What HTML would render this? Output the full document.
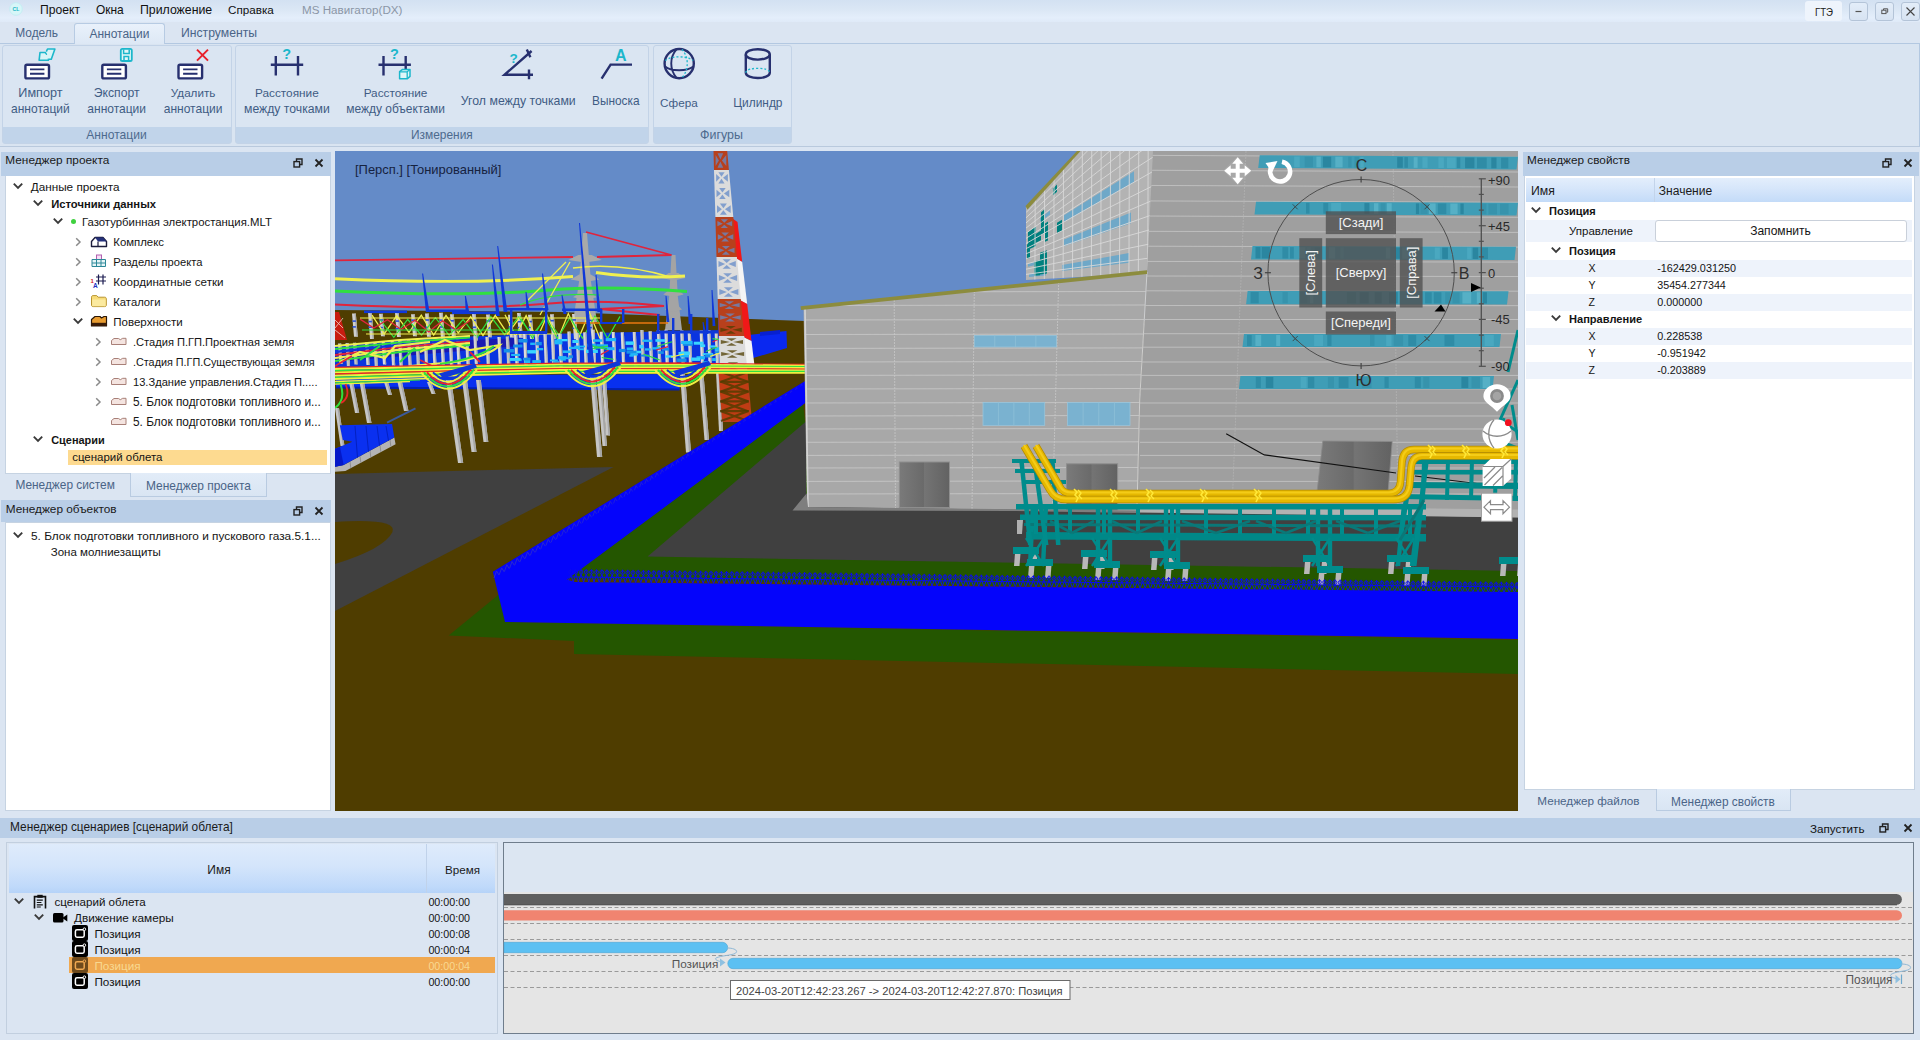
<!DOCTYPE html>
<html lang="ru"><head><meta charset="utf-8"><title>MS Навигатор(DX)</title><style>
*{box-sizing:border-box;margin:0;padding:0}
html,body{width:1920px;height:1040px;overflow:hidden}
body{background:#dbe5f2;font-family:"Liberation Sans",sans-serif;font-size:12px;color:#1e1e1e;position:relative}
.a{position:absolute;white-space:nowrap}
.t{position:absolute;white-space:nowrap;line-height:16px;height:16px}
.c{text-align:center}
.b{font-weight:bold}
#title{left:0;top:0;width:1920px;height:22px;background:linear-gradient(#d3e1f2 0,#dbe7f5 45%,#e4eefb 80%,#dfeaf8 100%)}
.menu{top:2px;font-size:12px;color:#111}
.tab{top:25px;font-size:12.5px;color:#4a6487}
#tabact{left:74px;top:23px;width:91px;height:21px;border:1px solid #b7cbe3;border-bottom:none;border-radius:3px 3px 0 0;background:linear-gradient(#e9f1fb,#dde8f5)}
#ribbon{left:0;top:43px;width:1920px;height:103.5px;border-top:1px solid #b3c8e1;border-bottom:1px solid #b9c9dd;border-right:1px solid #b3c8e1;background:#d9e4f1}
.grp{top:45px;height:99px;border:1px solid #c3d3e7;border-radius:3px;background:#dae5f2}
.grp i{position:absolute;left:0;right:0;top:81px;height:16px;background:#c1d4ea;display:block}
.gl{top:126.5px;font-size:12px;color:#4d6a8e;line-height:16px;text-align:center}
.rl{font-size:12px;color:#3f5c84;line-height:16.5px;text-align:center;width:130px}
.ph{background:#b9cee7;height:22px;font-size:12px;line-height:18px;color:#1a1a1a}
.ph span{position:absolute;left:5px;top:1px}
.pb{background:#fff;border:1px solid #c6d3e2}
.ptab{font-size:12.5px;color:#4a6487;line-height:16px}
.ptabact{border:1px solid #b9cbe1;border-top:none;background:linear-gradient(#e2ecf8,#d9e5f3)}
.tr{font-size:11.4px;color:#141414;line-height:16px;height:16px}
.sel{background:#fdda90}
.ar{position:absolute;width:10px;height:10px}
</style></head><body>
<div id="title" class="a"></div>
<svg class="a" style="left:9px;top:2px" width="14" height="14" viewBox="0 0 14 14"><circle cx="7" cy="7" r="6.3" fill="#d7f6f8" stroke="#bfeef2" stroke-width="0.8"/><text x="7" y="9" font-size="5.2" font-weight="bold" text-anchor="middle" fill="#19b6c6" font-family="Liberation Sans, sans-serif">CL</text></svg>
<div class="t menu" style="left:40px;top:2px;font-size:12.14px">Проект</div>
<div class="t menu" style="left:96px;top:2px;font-size:11.94px">Окна</div>
<div class="t menu" style="left:140px;top:2px;font-size:12.32px">Приложение</div>
<div class="t menu" style="left:228px;top:2px;font-size:11.66px">Справка</div>
<div class="t menu" style="left:302px;top:2px;color:#8b96a6;font-size:11.64px">MS Навигатор(DX)</div>
<div class="a" style="left:1805px;top:1px;width:37px;height:20px;background:#eef4fc;border-radius:3px"></div>
<div class="t  c" style="left:1803.5px;top:3.5px;width:40px;font-size:11.6px;color:#222;transform:scaleX(0.83)">ГТЭ</div>
<div class="a" style="left:1848.5px;top:2px;width:19px;height:19px;border:1px solid #b4c4d8;border-radius:3px;background:linear-gradient(#e3edf9,#d7e3f2)"></div>
<div class="a" style="left:1874.5px;top:2px;width:19px;height:19px;border:1px solid #b4c4d8;border-radius:3px;background:linear-gradient(#e3edf9,#d7e3f2)"></div>
<div class="a" style="left:1900.5px;top:2px;width:19px;height:19px;border:1px solid #b4c4d8;border-radius:3px;background:linear-gradient(#e3edf9,#d7e3f2)"></div>
<svg class="a" style="left:1848.5px;top:2px" width="19" height="19"><path d="M6.5 9.5h6" stroke="#555" stroke-width="1.2"/></svg>
<svg class="a" style="left:1874.5px;top:2px" width="19" height="19"><path d="M8.5 8V6.8h4.2v3.4h-1.2" fill="none" stroke="#555" stroke-width="1"/><rect x="6.8" y="8.2" width="4.2" height="3.4" fill="none" stroke="#555" stroke-width="1"/></svg>
<svg class="a" style="left:1900.5px;top:2px" width="19" height="19"><path d="M5.5 5.5l8 8M13.5 5.5l-8 8" stroke="#444" stroke-width="1.1"/></svg>
<div id="ribbon" class="a"></div>
<div id="tabact" class="a"></div>
<div class="t tab" style="left:15.2px;top:25px;font-size:11.95px">Модель</div>
<div class="t tab" style="left:89.4px;top:25.5px;font-size:12.0px">Аннотации</div>
<div class="t tab" style="left:181px;top:25px;font-size:12.19px">Инструменты</div>
<div class="a grp" style="left:2px;width:229.5px"><i></i></div>
<div class="t gl c" style="left:16.5px;top:126.5px;width:200px;font-size:12.08px;color:#4d6a8e">Аннотации</div>
<div class="a grp" style="left:235px;width:413.5px"><i></i></div>
<div class="t gl c" style="left:341.9px;top:126.5px;width:200px;font-size:11.9px;color:#4d6a8e">Измерения</div>
<div class="a grp" style="left:653px;width:139px"><i></i></div>
<div class="t gl c" style="left:621.5px;top:126.5px;width:200px;font-size:12.44px;color:#4d6a8e">Фигуры</div>
<div class="t rl c" style="left:-39.6px;top:84.5px;width:160px;font-size:12.64px;color:#3f5c84">Импорт</div>
<div class="t rl c" style="left:-39.6px;top:100.7px;width:160px;font-size:12.02px;color:#3f5c84">аннотаций</div>
<div class="t rl c" style="left:36.7px;top:84.5px;width:160px;font-size:12.19px;color:#3f5c84">Экспорт</div>
<div class="t rl c" style="left:36.7px;top:100.7px;width:160px;font-size:12.02px;color:#3f5c84">аннотации</div>
<div class="t rl c" style="left:113.1px;top:84.5px;width:160px;font-size:11.68px;color:#3f5c84">Удалить</div>
<div class="t rl c" style="left:113.1px;top:100.7px;width:160px;font-size:12.02px;color:#3f5c84">аннотации</div>
<div class="t rl c" style="left:206.89999999999998px;top:84.5px;width:160px;font-size:11.8px;color:#3f5c84">Расстояние</div>
<div class="t rl c" style="left:206.89999999999998px;top:100.7px;width:160px;font-size:12.21px;color:#3f5c84">между точками</div>
<div class="t rl c" style="left:315.5px;top:84.5px;width:160px;font-size:11.8px;color:#3f5c84">Расстояние</div>
<div class="t rl c" style="left:315.5px;top:100.7px;width:160px;font-size:11.99px;color:#3f5c84">между объектами</div>
<div class="t rl c" style="left:438.29999999999995px;top:92.7px;width:160px;font-size:12.29px;color:#3f5c84">Угол между точками</div>
<div class="t rl c" style="left:535.8px;top:92.7px;width:160px;font-size:11.85px;color:#3f5c84">Выноска</div>
<div class="t rl c" style="left:598.9px;top:94.5px;width:160px;font-size:11.7px;color:#3f5c84">Сфера</div>
<div class="t rl c" style="left:677.9px;top:94.5px;width:160px;font-size:11.91px;color:#3f5c84">Цилиндр</div>
<svg class="a" style="left:0;top:44px" width="800" height="84" viewBox="0 44 800 84"><rect x="25.4" y="64.8" width="23.6" height="13.6" rx="1.5" fill="#fff" stroke="#27306f" stroke-width="2.4"/><path d="M30.0 69.4h14.4M30.0 73.8h14.4" stroke="#27306f" stroke-width="1.9"/><path d="M40 52.5h5.2l1.3 1.6h3.2l-1.4 6.2h-9.2z" fill="#d9f4f7" stroke="#1cb7cb" stroke-width="1.6" stroke-linejoin="round"/><path d="M46.3 51.6l1.2-2.6h7.4l-3.6 10.3h-3" fill="#d9f4f7" stroke="#1cb7cb" stroke-width="1.6" stroke-linejoin="round"/><rect x="102.3" y="64.8" width="23.6" height="13.6" rx="1.5" fill="#fff" stroke="#27306f" stroke-width="2.4"/><path d="M106.89999999999999 69.4h14.4M106.89999999999999 73.8h14.4" stroke="#27306f" stroke-width="1.9"/><rect x="120.8" y="48.8" width="11" height="12.2" rx="1.6" fill="#e3f6f8" stroke="#1cb7cb" stroke-width="1.8"/><path d="M123.6 49.5v4h5.6v-4M124 61v-4.4h4.6V61" fill="none" stroke="#1cb7cb" stroke-width="1.5"/><rect x="178.5" y="64.8" width="23.6" height="13.6" rx="1.5" fill="#fff" stroke="#27306f" stroke-width="2.4"/><path d="M183.1 69.4h14.4M183.1 73.8h14.4" stroke="#27306f" stroke-width="1.9"/><path d="M197 49.6l11 11M208 49.6l-11 11" stroke="#e8202a" stroke-width="2"/><path d="M270.8 64.7h32.4M275.8 56v19.4M298.0 56v19.4" stroke="#27306f" stroke-width="2.4" fill="none"/><text x="286.8" y="58.6" font-size="14.5" font-weight="bold" fill="#1cb7cb" text-anchor="middle" font-family="Liberation Sans, sans-serif">?</text><path d="M378.5 64.7h32.4M383.5 56v19.4M405.7 56v19.4" stroke="#27306f" stroke-width="2.4" fill="none"/><text x="394.5" y="58.6" font-size="14.5" font-weight="bold" fill="#1cb7cb" text-anchor="middle" font-family="Liberation Sans, sans-serif">?</text><path d="M399.6 71.6l3-2.2h7.4v7l-2.6 2.4h-7.8z" fill="#dff6f8" stroke="#1cb7cb" stroke-width="1.5" stroke-linejoin="round"/><path d="M399.8 71.8h7.4v7M407.2 71.8l2.6-2.2" fill="none" stroke="#1cb7cb" stroke-width="1.3"/><path d="M533 74.8H504.5L531.6 51" fill="none" stroke="#27306f" stroke-width="2.4" stroke-linejoin="miter"/><path d="M529 69.6v9.6M526.8 49.6l3.6 7.6" stroke="#27306f" stroke-width="2.4"/><text x="513.5" y="62.6" font-size="13.5" font-weight="bold" fill="#1cb7cb" text-anchor="middle" font-family="Liberation Sans, sans-serif">?</text><path d="M601.6 78.6L610.6 64.6H632" fill="none" stroke="#27306f" stroke-width="2.4"/><text x="620.8" y="60.6" font-size="16" font-weight="bold" fill="#1cb7cb" text-anchor="middle" font-family="Liberation Sans, sans-serif">A</text><circle cx="679.2" cy="63.6" r="14.6" fill="none" stroke="#27306f" stroke-width="2.4"/><path d="M665 66.5c6 5 22 5 28.4 0M676.5 49.4c-7 8-7 20 0 28.4" fill="none" stroke="#27306f" stroke-width="1.9"/><path d="M665.2 60.6c6-5 22-5 28 0M682 49.4c7 8 7 20 0 28.4" fill="none" stroke="#1cb7cb" stroke-width="1.3" stroke-dasharray="2 2"/><path d="M745.8 54.4v18.4c0 7 24 7 24 0V54.4" fill="none" stroke="#27306f" stroke-width="2.4"/><ellipse cx="757.8" cy="54.4" rx="12" ry="5.2" fill="none" stroke="#27306f" stroke-width="2.4"/><path d="M745.8 72.8c0-6 24-6 24 0" fill="none" stroke="#1cb7cb" stroke-width="1.3" stroke-dasharray="2 2"/></svg>
<div class="a ph" style="left:1px;top:152px;width:330px;height:23.5px"><span style="left:4.3px;top:-0.7px;font-size:11.83px">Менеджер проекта</span></div>
<svg class="a" style="left:292.5px;top:157.5px" width="10" height="10" viewBox="0 0 10 10"><path d="M3.5 3V1h5.5v5.5h-2" fill="none" stroke="#222" stroke-width="1.4"/><rect x="1" y="3.6" width="5.6" height="5.4" fill="none" stroke="#222" stroke-width="1.4"/></svg>
<svg class="a" style="left:314px;top:158px" width="10" height="10" viewBox="0 0 10 10"><path d="M1.5 1.5L8.5 8.5M8.5 1.5L1.5 8.5" fill="none" stroke="#222" stroke-width="1.8"/></svg>
<div class="a pb" style="left:5px;top:175.5px;width:326px;height:298px;border-top:none"></div>
<svg class="a" style="left:12.5px;top:181px" width="10" height="10" viewBox="0 0 10 10"><path d="M0.8 2.6 L5 6.8 L9.2 2.6" fill="none" stroke="#3a3a3a" stroke-width="1.9"/></svg>
<div class="t tr" style="left:30.7px;top:179px;font-size:11.76px;">Данные проекта</div>
<svg class="a" style="left:32.5px;top:198px" width="10" height="10" viewBox="0 0 10 10"><path d="M0.8 2.6 L5 6.8 L9.2 2.6" fill="none" stroke="#3a3a3a" stroke-width="1.9"/></svg>
<div class="t tr b" style="left:51.2px;top:196px;font-size:11.22px;">Источники данных</div>
<svg class="a" style="left:52.5px;top:215.5px" width="10" height="10" viewBox="0 0 10 10"><path d="M0.8 2.6 L5 6.8 L9.2 2.6" fill="none" stroke="#3a3a3a" stroke-width="1.9"/></svg>
<div class="a" style="left:70.5px;top:219px;width:5px;height:5px;border-radius:50%;background:#3fd13f"></div>
<div class="t tr" style="left:82px;top:214px;font-size:11.37px;">Газотурбинная электростанция.MLT</div>
<svg class="a" style="left:73px;top:236.5px" width="10" height="10" viewBox="0 0 10 10"><path d="M3.2 1.2 L7 5 L3.2 8.8" fill="none" stroke="#8a8a8a" stroke-width="1.5"/></svg>
<div class="t tr" style="left:113.3px;top:234px;font-size:11.38px;">Комплекс</div>
<svg class="a" style="left:73px;top:256.5px" width="10" height="10" viewBox="0 0 10 10"><path d="M3.2 1.2 L7 5 L3.2 8.8" fill="none" stroke="#8a8a8a" stroke-width="1.5"/></svg>
<div class="t tr" style="left:113.3px;top:254px;font-size:11.2px;">Разделы проекта</div>
<svg class="a" style="left:73px;top:276.5px" width="10" height="10" viewBox="0 0 10 10"><path d="M3.2 1.2 L7 5 L3.2 8.8" fill="none" stroke="#8a8a8a" stroke-width="1.5"/></svg>
<div class="t tr" style="left:113.3px;top:274px;font-size:11.61px;">Координатные сетки</div>
<svg class="a" style="left:73px;top:296.5px" width="10" height="10" viewBox="0 0 10 10"><path d="M3.2 1.2 L7 5 L3.2 8.8" fill="none" stroke="#8a8a8a" stroke-width="1.5"/></svg>
<div class="t tr" style="left:113.3px;top:294px;font-size:11.25px;">Каталоги</div>
<svg class="a" style="left:72.5px;top:316px" width="10" height="10" viewBox="0 0 10 10"><path d="M0.8 2.6 L5 6.8 L9.2 2.6" fill="none" stroke="#3a3a3a" stroke-width="1.9"/></svg>
<div class="t tr" style="left:113.3px;top:314px;font-size:11.53px;">Поверхности</div>
<svg class="a" style="left:90px;top:232px" width="18" height="100" viewBox="0 0 18 100"><path d="M1.5 14.5V9.5L5 5.5h8l3.5 4v5z" fill="#fff" stroke="#1c1c3c" stroke-width="1.4" stroke-linejoin="round"/><path d="M5 5.5h8l3.5 4H8z" fill="#24307a"/><path d="M8 9.5v5" stroke="#1c1c3c" stroke-width="1.2"/><g transform="translate(0,20)"><rect x="6.5" y="3" width="5" height="4.5" fill="#f7dff7" stroke="#b060b0" stroke-width="1"/><path d="M2 7.5h13.5v7H2zM6.5 7.5v7M11 7.5v7M2 11h13.5" fill="#e6f5f7" stroke="#2c8898" stroke-width="1"/></g><g transform="translate(0,40)"><path d="M6 5h10M6 9h10M8.5 2.5v10M13 2.5v10" stroke="#1c1c50" stroke-width="1.2" fill="none"/><text x="0.5" y="11" font-size="6" font-weight="bold" fill="#d02020" font-family="Liberation Sans, sans-serif">1</text><text x="3" y="16" font-size="6.5" font-weight="bold" fill="#2030c0" font-family="Liberation Sans, sans-serif">A</text></g><g transform="translate(0,60)"><path d="M1.5 5.2c0-1 .6-1.6 1.6-1.6h3.6l1.4 1.6h6.6c1 0 1.6.6 1.6 1.6v6.2c0 1-.6 1.6-1.6 1.6H3.100c-1 0-1.600-.6-1.600-1.600z" fill="#f8dc78" stroke="#b89430" stroke-width="1"/><path d="M2.200 7.6h13.400v5.800c0 .4-.3.800-.800.800H3c-.5 0-.8-.3-.8-.800z" fill="#fbeaa0"/></g><g transform="translate(0,80)"><path d="M1.500 7.500l3.500-3h5l1.500 1.500 2.500-1.500h2.500v9.500h-15z" fill="#e89c30" stroke="#2a1606" stroke-width="1.200" stroke-linejoin="round"/><path d="M1.500 10.800h15v3.200h-15z" fill="#3a1c08"/></g></svg>
<svg class="a" style="left:92.5px;top:336.5px" width="10" height="10" viewBox="0 0 10 10"><path d="M3.2 1.2 L7 5 L3.2 8.8" fill="none" stroke="#8a8a8a" stroke-width="1.5"/></svg>
<div class="t tr" style="left:133px;top:334px;font-size:11.1px;">.Стадия П.ГП.Проектная земля</div>
<svg class="a" style="left:110px;top:334px" width="18" height="14" viewBox="0 0 18 14"><path d="M1.500 10.500V6.500l2.500-2h4.500l1.800 1.200 2.400-1.400h3.300v6.200z" fill="#f4e4e0" stroke="#a88078" stroke-width="1" stroke-linejoin="round"/></svg>
<svg class="a" style="left:92.5px;top:356.5px" width="10" height="10" viewBox="0 0 10 10"><path d="M3.2 1.2 L7 5 L3.2 8.8" fill="none" stroke="#8a8a8a" stroke-width="1.5"/></svg>
<div class="t tr" style="left:133px;top:354px;font-size:10.81px;">.Стадия П.ГП.Существующая земля</div>
<svg class="a" style="left:110px;top:354px" width="18" height="14" viewBox="0 0 18 14"><path d="M1.500 10.500V6.500l2.500-2h4.500l1.800 1.200 2.400-1.400h3.300v6.200z" fill="#f4e4e0" stroke="#a88078" stroke-width="1" stroke-linejoin="round"/></svg>
<svg class="a" style="left:92.5px;top:376.5px" width="10" height="10" viewBox="0 0 10 10"><path d="M3.2 1.2 L7 5 L3.2 8.8" fill="none" stroke="#8a8a8a" stroke-width="1.5"/></svg>
<div class="t tr" style="left:133px;top:374px;font-size:11.11px;">13.Здание управления.Стадия П.....</div>
<svg class="a" style="left:110px;top:374px" width="18" height="14" viewBox="0 0 18 14"><path d="M1.500 10.500V6.500l2.500-2h4.500l1.800 1.200 2.400-1.400h3.300v6.200z" fill="#f4e4e0" stroke="#a88078" stroke-width="1" stroke-linejoin="round"/></svg>
<svg class="a" style="left:92.5px;top:396.5px" width="10" height="10" viewBox="0 0 10 10"><path d="M3.2 1.2 L7 5 L3.2 8.8" fill="none" stroke="#8a8a8a" stroke-width="1.5"/></svg>
<div class="t tr" style="left:133px;top:394px;font-size:11.85px;">5. Блок подготовки топливного и...</div>
<svg class="a" style="left:110px;top:394px" width="18" height="14" viewBox="0 0 18 14"><path d="M1.500 10.500V6.500l2.500-2h4.500l1.800 1.200 2.400-1.400h3.300v6.200z" fill="#f4e4e0" stroke="#a88078" stroke-width="1" stroke-linejoin="round"/></svg>
<div class="t tr" style="left:133px;top:414px;font-size:11.85px;">5. Блок подготовки топливного и...</div>
<svg class="a" style="left:110px;top:414px" width="18" height="14" viewBox="0 0 18 14"><path d="M1.500 10.500V6.500l2.500-2h4.500l1.800 1.200 2.400-1.400h3.300v6.200z" fill="#f4e4e0" stroke="#a88078" stroke-width="1" stroke-linejoin="round"/></svg>
<svg class="a" style="left:32.5px;top:433.5px" width="10" height="10" viewBox="0 0 10 10"><path d="M0.8 2.6 L5 6.8 L9.2 2.6" fill="none" stroke="#3a3a3a" stroke-width="1.9"/></svg>
<div class="t tr b" style="left:51.2px;top:432px;font-size:10.95px;">Сценарии</div>
<div class="a sel" style="left:68px;top:450px;width:259px;height:14.5px"></div>
<div class="t tr" style="left:72.2px;top:449px;font-size:11.47px;">сценарий облета</div>
<div class="a ptabact" style="left:130px;top:473px;width:136.5px;height:24px"></div>
<div class="t ptab" style="left:15.4px;top:477.3px;font-size:11.89px">Менеджер систем</div>
<div class="t ptab" style="left:146px;top:477.8px;font-size:11.94px">Менеджер проекта</div>
<div class="a ph" style="left:1px;top:500px;width:330px"><span style="left:4.7px;top:0;font-size:11.82px">Менеджер объектов</span></div>
<svg class="a" style="left:292.5px;top:505.5px" width="10" height="10" viewBox="0 0 10 10"><path d="M3.5 3V1h5.5v5.5h-2" fill="none" stroke="#222" stroke-width="1.4"/><rect x="1" y="3.6" width="5.6" height="5.4" fill="none" stroke="#222" stroke-width="1.4"/></svg>
<svg class="a" style="left:314px;top:506px" width="10" height="10" viewBox="0 0 10 10"><path d="M1.5 1.5L8.5 8.5M8.5 1.5L1.5 8.5" fill="none" stroke="#222" stroke-width="1.8"/></svg>
<div class="a pb" style="left:5px;top:522px;width:326px;height:289px"></div>
<svg class="a" style="left:12.5px;top:529.5px" width="10" height="10" viewBox="0 0 10 10"><path d="M0.8 2.6 L5 6.8 L9.2 2.6" fill="none" stroke="#3a3a3a" stroke-width="1.9"/></svg>
<div class="t tr" style="left:31px;top:527.5px;font-size:11.84px;">5. Блок подготовки топливного и пускового газа.5.1...</div>
<div class="t tr" style="left:50.7px;top:544px;font-size:11.53px;">Зона молниезащиты</div>
<div class="a ph" style="left:1523px;top:152px;width:396px;height:23.5px"><span style="left:4px;top:-0.7px;font-size:11.77px">Менеджер свойств</span></div>
<svg class="a" style="left:1881.5px;top:157.5px" width="10" height="10" viewBox="0 0 10 10"><path d="M3.5 3V1h5.5v5.5h-2" fill="none" stroke="#222" stroke-width="1.4"/><rect x="1" y="3.6" width="5.6" height="5.4" fill="none" stroke="#222" stroke-width="1.4"/></svg>
<svg class="a" style="left:1902.5px;top:158px" width="10" height="10" viewBox="0 0 10 10"><path d="M1.5 1.5L8.5 8.5M8.5 1.5L1.5 8.5" fill="none" stroke="#222" stroke-width="1.8"/></svg>
<div class="a pb" style="left:1524px;top:175.5px;width:391px;height:614.5px;border-top:none"></div>
<div class="a" style="left:1526px;top:178px;width:386px;height:23.5px;background:linear-gradient(#e3eefc 0,#d3e4fa 55%,#c3dbf8 100%)"></div>
<div class="a" style="left:1654px;top:178px;width:1px;height:23.5px;background:#c3d4ea"></div>
<div class="t " style="left:1531px;top:182.5px;font-size:12.22px;color:#1a1a1a">Имя</div>
<div class="t " style="left:1658.8px;top:182.5px;font-size:12.04px;color:#1a1a1a">Значение</div>
<div class="a" style="left:1526px;top:219.5px;width:386px;height:22.5px;background:#eef3fb"></div>
<div class="a" style="left:1526px;top:259.5px;width:386px;height:17px;background:#eef3fb"></div>
<div class="a" style="left:1526px;top:293.5px;width:386px;height:17px;background:#eef3fb"></div>
<div class="a" style="left:1526px;top:327.5px;width:386px;height:17px;background:#eef3fb"></div>
<div class="a" style="left:1526px;top:361.5px;width:386px;height:17px;background:#eef3fb"></div>
<svg class="a" style="left:1531px;top:205px" width="10" height="10" viewBox="0 0 10 10"><path d="M0.8 2.6 L5 6.8 L9.2 2.6" fill="none" stroke="#3a3a3a" stroke-width="1.9"/></svg>
<div class="t tr b" style="left:1549px;top:203px;font-size:11.03px;">Позиция</div>
<div class="t tr" style="left:1569px;top:223px;font-size:11.51px;">Управление</div>
<div class="a" style="left:1654.5px;top:219.5px;width:252.5px;height:22px;border:1px solid #c9d0da;border-radius:3px;background:#fff"></div>
<div class="t tr c" style="left:1720.5px;top:223px;width:120px;font-size:12.07px">Запомнить</div>
<svg class="a" style="left:1550.5px;top:245px" width="10" height="10" viewBox="0 0 10 10"><path d="M0.8 2.6 L5 6.8 L9.2 2.6" fill="none" stroke="#3a3a3a" stroke-width="1.9"/></svg>
<div class="t tr b" style="left:1569px;top:243px;font-size:11.03px;">Позиция</div>
<div class="t tr" style="left:1588.5px;top:260px;font-size:10.6px;">X</div>
<div class="t tr" style="left:1657.2px;top:260px;font-size:10.82px;">-162429.031250</div>
<div class="t tr" style="left:1588.5px;top:277px;font-size:10.6px;">Y</div>
<div class="t tr" style="left:1657.2px;top:277px;font-size:10.74px;">35454.277344</div>
<div class="t tr" style="left:1588.5px;top:294px;font-size:10.6px;">Z</div>
<div class="t tr" style="left:1657.2px;top:294px;font-size:10.79px;">0.000000</div>
<svg class="a" style="left:1550.5px;top:313px" width="10" height="10" viewBox="0 0 10 10"><path d="M0.8 2.6 L5 6.8 L9.2 2.6" fill="none" stroke="#3a3a3a" stroke-width="1.9"/></svg>
<div class="t tr b" style="left:1569px;top:311px;font-size:11.08px;">Направление</div>
<div class="t tr" style="left:1588.5px;top:328px;font-size:10.6px;">X</div>
<div class="t tr" style="left:1657.2px;top:328px;font-size:10.79px;">0.228538</div>
<div class="t tr" style="left:1588.5px;top:345px;font-size:10.6px;">Y</div>
<div class="t tr" style="left:1657.2px;top:345px;font-size:10.79px;">-0.951942</div>
<div class="t tr" style="left:1588.5px;top:362px;font-size:10.6px;">Z</div>
<div class="t tr" style="left:1657.2px;top:362px;font-size:10.79px;">-0.203889</div>
<div class="a ptabact" style="left:1655.5px;top:789px;width:135px;height:22px"></div>
<div class="t ptab" style="left:1537.3px;top:793.2px;font-size:11.69px">Менеджер файлов</div>
<div class="t ptab" style="left:1671px;top:793.8px;font-size:11.86px">Менеджер свойств</div>
<div class="a ph" style="left:0;top:818px;width:1920px;height:20px"><span style="left:10px;top:0px;font-size:11.89px">Менеджер сценариев [сценарий облета]</span></div>
<div class="t " style="left:1810px;top:820.5px;font-size:11.63px;color:#111">Запустить</div>
<svg class="a" style="left:1878.5px;top:822.5px" width="10" height="10" viewBox="0 0 10 10"><path d="M3.5 3V1h5.5v5.5h-2" fill="none" stroke="#222" stroke-width="1.4"/><rect x="1" y="3.6" width="5.6" height="5.4" fill="none" stroke="#222" stroke-width="1.4"/></svg>
<svg class="a" style="left:1902.5px;top:823px" width="10" height="10" viewBox="0 0 10 10"><path d="M1.5 1.5L8.5 8.5M8.5 1.5L1.5 8.5" fill="none" stroke="#222" stroke-width="1.8"/></svg>
<div class="a" style="left:6px;top:842px;width:492px;height:192px;border:1px solid #c2cfdf;background:#dbe5f2"></div>
<div class="a" style="left:9px;top:844px;width:486px;height:48.5px;background:linear-gradient(#dfebfb 0,#d4e5fb 45%,#bfd9fa 88%,#b6d3f8 100%)"></div>
<div class="a" style="left:425.5px;top:844px;width:1px;height:48.5px;background:#c0d2ea"></div>
<div class="t  c" style="left:189.0px;top:862px;width:60px;font-size:11.96px;color:#1a1a1a">Имя</div>
<div class="t  c" style="left:432.5px;top:862px;width:60px;font-size:11.63px;color:#1a1a1a">Время</div>
<div class="a" style="left:69px;top:957px;width:426px;height:16px;background:#f0a850"></div>
<svg class="a" style="left:13.5px;top:895.5px" width="10" height="10" viewBox="0 0 10 10"><path d="M0.8 2.6 L5 6.8 L9.2 2.6" fill="none" stroke="#3a3a3a" stroke-width="1.9"/></svg>
<svg class="a" style="left:33.5px;top:911.5px" width="10" height="10" viewBox="0 0 10 10"><path d="M0.8 2.6 L5 6.8 L9.2 2.6" fill="none" stroke="#3a3a3a" stroke-width="1.9"/></svg>
<div class="t tr" style="left:54.4px;top:894.3px;font-size:11.6px;">сценарий облета</div>
<div class="t tr" style="left:74px;top:910.2px;font-size:11.77px;">Движение камеры</div>
<div class="t tr" style="left:428.4px;top:894.3px;font-size:10.71px;">00:00:00</div>
<div class="t tr" style="left:428.4px;top:910.2px;font-size:10.71px;">00:00:00</div>
<div class="t tr" style="left:428.4px;top:926.2px;font-size:10.71px;">00:00:08</div>
<div class="t tr" style="left:94.4px;top:926.2px;font-size:11.71px;">Позиция</div>
<svg class="a" style="left:72px;top:925.2px" width="16" height="16" viewBox="0 0 16 16"><rect x="0" y="0" width="16" height="16" rx="2" fill="#000"/><rect x="3.400" y="4.800" width="8.800" height="7.400" rx="1.600" fill="none" stroke="#fff" stroke-width="1.500"/><circle cx="12.400" cy="4.200" r="1.300" fill="#000" stroke="#fff" stroke-width="1"/></svg>
<div class="t tr" style="left:428.4px;top:942.2px;font-size:10.71px;">00:00:04</div>
<div class="t tr" style="left:94.4px;top:942.2px;font-size:11.71px;">Позиция</div>
<svg class="a" style="left:72px;top:941.2px" width="16" height="16" viewBox="0 0 16 16"><rect x="0" y="0" width="16" height="16" rx="2" fill="#000"/><rect x="3.400" y="4.800" width="8.800" height="7.400" rx="1.600" fill="none" stroke="#fff" stroke-width="1.500"/><circle cx="12.400" cy="4.200" r="1.300" fill="#000" stroke="#fff" stroke-width="1"/></svg>
<div class="t tr" style="left:428.4px;top:958.2px;font-size:10.71px;color:#f8d890;">00:00:04</div>
<div class="t tr" style="left:94.4px;top:958.2px;font-size:11.71px;color:#f8d890;">Позиция</div>
<svg class="a" style="left:72px;top:957.2px" width="16" height="16" viewBox="0 0 16 16"><rect x="0" y="0" width="16" height="16" rx="2" fill="#6e4a1c"/><rect x="3.400" y="4.800" width="8.800" height="7.400" rx="1.600" fill="none" stroke="#f0a850" stroke-width="1.500"/><circle cx="12.400" cy="4.200" r="1.300" fill="#6e4a1c" stroke="#f0a850" stroke-width="1"/></svg>
<div class="t tr" style="left:428.4px;top:974.2px;font-size:10.71px;">00:00:00</div>
<div class="t tr" style="left:94.4px;top:974.2px;font-size:11.71px;">Позиция</div>
<svg class="a" style="left:72px;top:973.2px" width="16" height="16" viewBox="0 0 16 16"><rect x="0" y="0" width="16" height="16" rx="2" fill="#000"/><rect x="3.400" y="4.800" width="8.800" height="7.400" rx="1.600" fill="none" stroke="#fff" stroke-width="1.500"/><circle cx="12.400" cy="4.200" r="1.300" fill="#000" stroke="#fff" stroke-width="1"/></svg>
<svg class="a" style="left:33.3px;top:894.3px" width="14" height="15" viewBox="0 0 14 15"><path d="M1.500 14.500V2.600h11V14.500" fill="none" stroke="#111" stroke-width="1.600"/><path d="M4.300 0.800h5.400v3h-5.400z" fill="#111"/><path d="M3.800 6.200h6M3.800 8.500h4.600M3.800 10.800h6M3.800 13h4" stroke="#111" stroke-width="1.200"/></svg>
<svg class="a" style="left:52.700px;top:911.800px" width="15" height="12" viewBox="0 0 15 12"><rect x="0" y="1" width="10.500" height="9.500" rx="1.500" fill="#000"/><path d="M10 5.500l4.300-3v7l-4.300-3z" fill="#000"/></svg>
<svg class="a" style="left:503px;top:842px" width="1411" height="192" viewBox="503 842 1411 192"><rect x="503.500" y="842.500" width="1410" height="191" fill="#dce6f2" stroke="#6f7d8c" stroke-width="1"/><rect x="504" y="892" width="1409" height="141" fill="#e5e5e5"/><path d="M504 907.5H1913" stroke="#9a9a9a" stroke-width="1" stroke-dasharray="4 2.500"/><path d="M504 923.5H1913" stroke="#9a9a9a" stroke-width="1" stroke-dasharray="4 2.500"/><path d="M504 939.5H1913" stroke="#9a9a9a" stroke-width="1" stroke-dasharray="4 2.500"/><path d="M504 955.5H1913" stroke="#9a9a9a" stroke-width="1" stroke-dasharray="4 2.500"/><path d="M504 971.5H1913" stroke="#9a9a9a" stroke-width="1" stroke-dasharray="4 2.500"/><path d="M504 987.5H1913" stroke="#9a9a9a" stroke-width="1" stroke-dasharray="4 2.500"/><path d="M504 894H1896.500a5.400 5.400 0 0 1 0 10.800H504z" fill="#5f5f5f"/><path d="M504 904.800H1897" stroke="#444" stroke-width="1"/><path d="M504 910.200H1896.800a5.200 5.200 0 0 1 0 10.400H504z" fill="#f08470"/><path d="M504 942.300H722.500a5.200 5.200 0 0 1 0 10.400H504z" fill="#5cc0f2" stroke="#4aa4d4" stroke-width="0.600"/><path d="M733 958.300H1896.800a5.200 5.200 0 0 1 0 10.400H733a5.200 5.200 0 0 1 0-10.400z" fill="#5cc0f2" stroke="#4aa4d4" stroke-width="0.600"/><path d="M727 948c8 0 12 3 8 5.500c-4 2-14 2-19 4.500c-2 1.500 2 3 6 4" fill="none" stroke="#8fb8d6" stroke-width="1"/><path d="M720 958.500l5.500 4-5.500 4z" fill="#8fc0e0"/><path d="M1901 964c8 0 12 3 8 5.500c-4 2-14 2-18 5c-2 1.500 1 3 5 4" fill="none" stroke="#8fb8d6" stroke-width="1"/><path d="M1895.500 975l5 4.300-5 4.300z" fill="#8fc0e0"/><path d="M1901.500 974.500v9.500" stroke="#6fa8cc" stroke-width="1.200"/><text x="671.7" y="968" font-size="11.81" fill="#555" font-family="Liberation Sans, sans-serif">Позиция</text><text x="1845.6" y="984" font-size="11.86" fill="#555" font-family="Liberation Sans, sans-serif">Позиция</text><rect x="730.500" y="980.500" width="339.500" height="19" fill="#fff" stroke="#6a6a6a" stroke-width="1"/><text x="736" y="994.600" font-size="11.22" fill="#444" font-family="Liberation Sans, sans-serif">2024-03-20T12:42:23.267 -&gt; 2024-03-20T12:42:27.870: Позиция</text></svg>
<svg class="a" style="left:335px;top:151px" width="1183" height="660" viewBox="335 151 1183 660" font-family="Liberation Sans, sans-serif"><rect x="335" y="151" width="1183" height="660" fill="#648bc8"/><polygon points="335,310 560,312 805,321 1518,321 1518,811 335,811" fill="#4f3d00" /><polygon points="583,233 587,233 591,281.9 597,322 573,322 579,281.9" fill="#a9a9a9" /><polygon points="568.2,259.9 578.3,254.9 591.7,254.9 601.8,259.9 585,262.4" fill="#a9a9a9" /><polygon points="570.6,279.5 579.2,274.5 590.8,274.5 599.4,279.5 585,282" fill="#a9a9a9" /><polygon points="573,297.3 580.2,292.3 589.8,292.3 597,297.3 585,299.8" fill="#a9a9a9" /><polygon points="671.5,255 675.5,255 677.8,296.2 682,330 665,330 669.2,296.2" fill="#a4a4a4" /><polygon points="661.6,278 668.7,273 678.3,273 685.4,278 673.5,280.5" fill="#a4a4a4" /><polygon points="663.3,294.5 669.4,289.5 677.6,289.5 683.7,294.5 673.5,297" fill="#a4a4a4" /><polygon points="665,309.5 670.1,304.5 676.9,304.5 682,309.5 673.5,312" fill="#a4a4a4" /><path d="M335 260.3L573 257" stroke="#e0243c" stroke-width="1.8" fill="none"/><path d="M586 232L671.5 255L597 257" stroke="#e0243c" stroke-width="1.8" fill="none"/><path d="M335 278.7Q470 285 573 276.5M596 272.5Q640 279 685 276" stroke="#f0f050" stroke-width="2.9" fill="none"/><path d="M573 268Q620 262 670 277" stroke="#f0f050" stroke-width="1.5" fill="none"/><path d="M335 291Q470 297.5 563 289Q620 286 687 291.5" stroke="#30e040" stroke-width="2.9" fill="none"/><path d="M335 304.5Q465 311 563 302.5Q610 300 664 306L600 309L660 315" stroke="#e0243c" stroke-width="2" fill="none"/><path d="M528 300L566 262M570 262L540 315" stroke="#f0f050" stroke-width="1.3" fill="none"/><path d="M520 305Q550 292 600 295" stroke="#30e040" stroke-width="1.2" fill="none"/><polygon points="335,346 430,338 520,334.5 730,330 746,332 746,364 335,370" fill="#0a34e0" /><polygon points="335,352 470,340 520,338 520,346 335,362" fill="#1a1ab0" /><polygon points="352,313.5 355.8,313.5 357.8,336.8 354,336.8" fill="#cfcfcf" /><polygon points="354.5,313.5 355.8,313.5 357.8,336.8 356.5,336.8" fill="#a9a9a9" /><rect x="352.5" y="320.3" width="3.4" height="1.6" fill="#2a50d8"/><rect x="352.5" y="326.1" width="3.4" height="1.6" fill="#2a50d8"/><polygon points="368,312.8 371.8,312.8 373.8,338.9 370,338.9" fill="#cfcfcf" /><polygon points="370.5,312.8 371.8,312.8 373.8,338.9 372.5,338.9" fill="#a9a9a9" /><rect x="368.5" y="320.8" width="3.4" height="1.6" fill="#2a50d8"/><rect x="368.5" y="326.4" width="3.4" height="1.6" fill="#2a50d8"/><polygon points="379,313.8 382.8,313.8 384.8,336.3 381,336.3" fill="#cfcfcf" /><polygon points="381.5,313.8 382.8,313.8 384.8,336.3 383.5,336.3" fill="#a9a9a9" /><rect x="379.5" y="319.2" width="3.4" height="1.6" fill="#2a50d8"/><rect x="379.5" y="326.8" width="3.4" height="1.6" fill="#2a50d8"/><polygon points="395,312.9 398.8,312.9 400.8,337.1 397,337.1" fill="#cfcfcf" /><polygon points="397.5,312.9 398.8,312.9 400.8,337.1 399.5,337.1" fill="#a9a9a9" /><rect x="395.5" y="320.3" width="3.4" height="1.6" fill="#2a50d8"/><rect x="395.5" y="327.9" width="3.4" height="1.6" fill="#2a50d8"/><polygon points="411,314.3 414.8,314.3 416.8,336.2 413,336.2" fill="#cfcfcf" /><polygon points="413.5,314.3 414.8,314.3 416.8,336.2 415.5,336.2" fill="#a9a9a9" /><rect x="411.5" y="319.4" width="3.4" height="1.6" fill="#2a50d8"/><rect x="411.5" y="327.1" width="3.4" height="1.6" fill="#2a50d8"/><polygon points="425,313.4 428.8,313.4 430.8,336.7 427,336.7" fill="#cfcfcf" /><polygon points="427.5,313.4 428.8,313.4 430.8,336.7 429.5,336.7" fill="#a9a9a9" /><rect x="425.5" y="319.2" width="3.4" height="1.6" fill="#2a50d8"/><rect x="425.5" y="326.6" width="3.4" height="1.6" fill="#2a50d8"/><polygon points="439,312.8 442.8,312.8 444.8,338.9 441,338.9" fill="#cfcfcf" /><polygon points="441.5,312.8 442.8,312.8 444.8,338.9 443.5,338.9" fill="#a9a9a9" /><rect x="439.5" y="319.4" width="3.4" height="1.6" fill="#2a50d8"/><rect x="439.5" y="326.2" width="3.4" height="1.6" fill="#2a50d8"/><polygon points="450,314.2 453.8,314.2 455.8,339.1 452,339.1" fill="#cfcfcf" /><polygon points="452.5,314.2 453.8,314.2 455.8,339.1 454.5,339.1" fill="#a9a9a9" /><rect x="450.5" y="320" width="3.4" height="1.6" fill="#2a50d8"/><rect x="450.5" y="327.1" width="3.4" height="1.6" fill="#2a50d8"/><polygon points="472,313.9 475.8,313.9 477.8,340.6 474,340.6" fill="#cfcfcf" /><polygon points="474.5,313.9 475.8,313.9 477.8,340.6 476.5,340.6" fill="#a9a9a9" /><rect x="472.5" y="319.7" width="3.4" height="1.6" fill="#2a50d8"/><rect x="472.5" y="326.5" width="3.4" height="1.6" fill="#2a50d8"/><polygon points="486,314.6 489.8,314.6 491.8,337.2 488,337.2" fill="#cfcfcf" /><polygon points="488.5,314.6 489.8,314.6 491.8,337.2 490.5,337.2" fill="#a9a9a9" /><rect x="486.5" y="320.1" width="3.4" height="1.6" fill="#2a50d8"/><rect x="486.5" y="327.1" width="3.4" height="1.6" fill="#2a50d8"/><polygon points="508,314.7 511.8,314.7 513.8,337.4 510,337.4" fill="#cfcfcf" /><polygon points="510.5,314.7 511.8,314.7 513.8,337.4 512.5,337.4" fill="#a9a9a9" /><rect x="508.5" y="321" width="3.4" height="1.6" fill="#2a50d8"/><rect x="508.5" y="326.2" width="3.4" height="1.6" fill="#2a50d8"/><polygon points="517,313 520.8,313 522.8,337.7 519,337.7" fill="#cfcfcf" /><polygon points="519.5,313 520.8,313 522.8,337.7 521.5,337.7" fill="#a9a9a9" /><rect x="517.5" y="320.9" width="3.4" height="1.6" fill="#2a50d8"/><rect x="517.5" y="326.8" width="3.4" height="1.6" fill="#2a50d8"/><polygon points="528,314.8 531.8,314.8 533.8,338.9 530,338.9" fill="#cfcfcf" /><polygon points="530.5,314.8 531.8,314.8 533.8,338.9 532.5,338.9" fill="#a9a9a9" /><rect x="528.5" y="320.8" width="3.4" height="1.6" fill="#2a50d8"/><rect x="528.5" y="326.6" width="3.4" height="1.6" fill="#2a50d8"/><polygon points="550,314.3 553.8,314.3 555.8,338.9 552,338.9" fill="#cfcfcf" /><polygon points="552.5,314.3 553.8,314.3 555.8,338.9 554.5,338.9" fill="#a9a9a9" /><rect x="550.5" y="319.9" width="3.4" height="1.6" fill="#2a50d8"/><rect x="550.5" y="327.7" width="3.4" height="1.6" fill="#2a50d8"/><polygon points="572,313.9 575.8,313.9 577.8,339.3 574,339.3" fill="#cfcfcf" /><polygon points="574.5,313.9 575.8,313.9 577.8,339.3 576.5,339.3" fill="#a9a9a9" /><rect x="572.5" y="319.1" width="3.4" height="1.6" fill="#2a50d8"/><rect x="572.5" y="327.4" width="3.4" height="1.6" fill="#2a50d8"/><polygon points="588,315.5 591.8,315.5 593.8,340.1 590,340.1" fill="#cfcfcf" /><polygon points="590.5,315.5 591.8,315.5 593.8,340.1 592.5,340.1" fill="#a9a9a9" /><rect x="588.5" y="319.6" width="3.4" height="1.6" fill="#2a50d8"/><rect x="588.5" y="326.8" width="3.4" height="1.6" fill="#2a50d8"/><path d="M372 315.1 L384.3 333.8 L396.7 315.7 L409 332.5 L421.3 315.2 L433.7 335.1 L446 315.5 L458.3 333 L470.7 316.6 L483 335.5 L495.3 315.3 L507.7 333.8 L520 317.2" stroke="#f0f050" stroke-width="1.3" fill="none"/><path d="M380 319.5 L393.8 337.3 L407.7 319.5 L421.5 335.1 L435.4 317.7 L449.2 335.4 L463.1 319.5 L476.9 337.8 L490.8 316.6 L504.6 334.7 L518.5 316.9 L532.3 334.9 L546.2 317.9 L560 336.4" stroke="#30e040" stroke-width="1.2" fill="none"/><path d="M360 319.1 L373.8 328 L387.5 319.7 L401.2 329.5 L415 320.3 L428.8 331.8 L442.5 320.8 L456.2 330.1 L470 320.5" stroke="#e0243c" stroke-width="1.3" fill="none"/><path d="M505 314.7 L515.6 336.2 L526.1 315.6 L536.7 339.1 L547.2 315.5 L557.8 339.2 L568.3 313.6 L578.9 337.6 L589.4 312.4 L600 338.5" stroke="#f0f050" stroke-width="1.3" fill="none"/><path d="M520 316.2 L532.5 338.3 L545 316.8 L557.5 338.6 L570 317.4 L582.5 338.2 L595 316 L607.5 338.6 L620 316.4" stroke="#30e040" stroke-width="1.2" fill="none"/><path d="M360 318H600M366 334H560" stroke="#f0f050" stroke-width="1.1"/><path d="M362 330H520" stroke="#30e040" stroke-width="1.1"/><path d="M575 323H668" stroke="#e87810" stroke-width="1.3"/><polygon points="338,343.4 341.2,343.4 342.6,364.1 339.4,364.1" fill="#d4d4d4" /><polygon points="340.1,343.4 341.2,343.4 342.6,364.1 341.5,364.1" fill="#a9a9a9" /><polygon points="345.5,343.1 348.7,343.1 350.1,365.9 346.9,365.9" fill="#c4c4c4" /><polygon points="347.6,343.1 348.7,343.1 350.1,365.9 349,365.9" fill="#a9a9a9" /><polygon points="353,342.7 356.2,342.7 357.6,364.4 354.4,364.4" fill="#c4c4c4" /><polygon points="355.1,342.7 356.2,342.7 357.6,364.4 356.5,364.4" fill="#a9a9a9" /><polygon points="365,342.4 368.2,342.4 369.6,364.9 366.4,364.9" fill="#d4d4d4" /><polygon points="367.1,342.4 368.2,342.4 369.6,364.9 368.5,364.9" fill="#a9a9a9" /><polygon points="373.3,342.8 376.5,342.8 377.9,366.2 374.7,366.2" fill="#c4c4c4" /><polygon points="375.4,342.8 376.5,342.8 377.9,366.2 376.8,366.2" fill="#a9a9a9" /><polygon points="381.6,341.7 384.8,341.7 386.2,364.6 383,364.6" fill="#dcdcdc" /><polygon points="383.7,341.7 384.8,341.7 386.2,364.6 385.1,364.6" fill="#a9a9a9" /><polygon points="390.6,340.2 393.8,340.2 395.2,365.6 392,365.6" fill="#d4d4d4" /><polygon points="392.7,340.2 393.8,340.2 395.2,365.6 394.1,365.6" fill="#a9a9a9" /><polygon points="398.1,340.2 401.3,340.2 402.7,365.9 399.5,365.9" fill="#d4d4d4" /><polygon points="400.2,340.2 401.3,340.2 402.7,365.9 401.6,365.9" fill="#a9a9a9" /><polygon points="407.1,340.5 410.3,340.5 411.7,366.7 408.5,366.7" fill="#c4c4c4" /><polygon points="409.2,340.5 410.3,340.5 411.7,366.7 410.6,366.7" fill="#a9a9a9" /><polygon points="415.4,340.1 418.6,340.1 420,366.3 416.8,366.3" fill="#c4c4c4" /><polygon points="417.5,340.1 418.6,340.1 420,366.3 418.9,366.3" fill="#a9a9a9" /><polygon points="423.7,339.9 426.9,339.9 428.3,366.4 425.1,366.4" fill="#d4d4d4" /><polygon points="425.8,339.9 426.9,339.9 428.3,366.4 427.2,366.4" fill="#a9a9a9" /><polygon points="432,340.1 435.2,340.1 436.6,366.2 433.4,366.2" fill="#d4d4d4" /><polygon points="434.1,340.1 435.2,340.1 436.6,366.2 435.5,366.2" fill="#a9a9a9" /><polygon points="440.3,338.8 443.5,338.8 444.9,365.1 441.7,365.1" fill="#d4d4d4" /><polygon points="442.4,338.8 443.5,338.8 444.9,365.1 443.8,365.1" fill="#a9a9a9" /><polygon points="448.6,339.2 451.8,339.2 453.2,365.4 450,365.4" fill="#d4d4d4" /><polygon points="450.7,339.2 451.8,339.2 453.2,365.4 452.1,365.4" fill="#a9a9a9" /><polygon points="456.1,339.3 459.3,339.3 460.7,365.3 457.5,365.3" fill="#dcdcdc" /><polygon points="458.2,339.3 459.3,339.3 460.7,365.3 459.6,365.3" fill="#a9a9a9" /><polygon points="465.1,338.9 468.3,338.9 469.7,365.1 466.5,365.1" fill="#d4d4d4" /><polygon points="467.2,338.9 468.3,338.9 469.7,365.1 468.6,365.1" fill="#a9a9a9" /><polygon points="473.4,336.3 476.6,336.3 478,364.6 474.8,364.6" fill="#d4d4d4" /><polygon points="475.5,336.3 476.6,336.3 478,364.6 476.9,364.6" fill="#a9a9a9" /><polygon points="485.4,336.9 488.6,336.9 490,366.7 486.8,366.7" fill="#d4d4d4" /><polygon points="487.5,336.9 488.6,336.9 490,366.7 488.9,366.7" fill="#a9a9a9" /><polygon points="497.4,337.1 500.6,337.1 502,365 498.8,365" fill="#dcdcdc" /><polygon points="499.5,337.1 500.6,337.1 502,365 500.9,365" fill="#a9a9a9" /><polygon points="505.7,336.5 508.9,336.5 510.3,364.4 507.1,364.4" fill="#c4c4c4" /><polygon points="507.8,336.5 508.9,336.5 510.3,364.4 509.2,364.4" fill="#a9a9a9" /><polygon points="514,335 517.2,335 518.6,364.5 515.4,364.5" fill="#dcdcdc" /><polygon points="516.1,335 517.2,335 518.6,364.5 517.5,364.5" fill="#a9a9a9" /><polygon points="523,333.4 526.2,333.4 527.6,366.8 524.4,366.8" fill="#dcdcdc" /><polygon points="525.1,333.4 526.2,333.4 527.6,366.8 526.5,366.8" fill="#a9a9a9" /><polygon points="535,333.9 538.2,333.9 539.6,366.2 536.4,366.2" fill="#d4d4d4" /><polygon points="537.1,333.9 538.2,333.9 539.6,366.2 538.5,366.2" fill="#a9a9a9" /><polygon points="543.3,332.6 546.5,332.6 547.9,364.4 544.7,364.4" fill="#d4d4d4" /><polygon points="545.4,332.6 546.5,332.6 547.9,364.4 546.8,364.4" fill="#a9a9a9" /><polygon points="550.8,334.4 554,334.4 555.4,366.4 552.2,366.4" fill="#d4d4d4" /><polygon points="552.9,334.4 554,334.4 555.4,366.4 554.3,366.4" fill="#a9a9a9" /><polygon points="558.3,333.8 561.5,333.8 562.9,366.9 559.7,366.9" fill="#dcdcdc" /><polygon points="560.4,333.8 561.5,333.8 562.9,366.9 561.8,366.9" fill="#a9a9a9" /><polygon points="567.3,331.4 570.5,331.4 571.9,365.6 568.7,365.6" fill="#d4d4d4" /><polygon points="569.4,331.4 570.5,331.4 571.9,365.6 570.8,365.6" fill="#a9a9a9" /><polygon points="575.6,332.9 578.8,332.9 580.2,366.2 577,366.2" fill="#d4d4d4" /><polygon points="577.7,332.9 578.8,332.9 580.2,366.2 579.1,366.2" fill="#a9a9a9" /><polygon points="583.1,332.3 586.3,332.3 587.7,364.4 584.5,364.4" fill="#d4d4d4" /><polygon points="585.2,332.3 586.3,332.3 587.7,364.4 586.6,364.4" fill="#a9a9a9" /><polygon points="591.4,329.8 594.6,329.8 596,364.6 592.8,364.6" fill="#dcdcdc" /><polygon points="593.5,329.8 594.6,329.8 596,364.6 594.9,364.6" fill="#a9a9a9" /><polygon points="599.7,331.8 602.9,331.8 604.3,365 601.1,365" fill="#dcdcdc" /><polygon points="601.8,331.8 602.9,331.8 604.3,365 603.2,365" fill="#a9a9a9" /><polygon points="611.7,332 614.9,332 616.3,364.2 613.1,364.2" fill="#dcdcdc" /><polygon points="613.8,332 614.9,332 616.3,364.2 615.2,364.2" fill="#a9a9a9" /><polygon points="620.7,332.2 623.9,332.2 625.3,366 622.1,366" fill="#dcdcdc" /><polygon points="622.8,332.2 623.9,332.2 625.3,366 624.2,366" fill="#a9a9a9" /><polygon points="632.7,332 635.9,332 637.3,366.6 634.1,366.6" fill="#d4d4d4" /><polygon points="634.8,332 635.9,332 637.3,366.6 636.2,366.6" fill="#a9a9a9" /><polygon points="640.2,330 643.4,330 644.8,365.5 641.6,365.5" fill="#c4c4c4" /><polygon points="642.3,330 643.4,330 644.8,365.5 643.7,365.5" fill="#a9a9a9" /><polygon points="648.5,331.3 651.7,331.3 653.1,366.3 649.9,366.3" fill="#d4d4d4" /><polygon points="650.6,331.3 651.7,331.3 653.1,366.3 652,366.3" fill="#a9a9a9" /><polygon points="656.8,329.9 660,329.9 661.4,365.9 658.2,365.9" fill="#d4d4d4" /><polygon points="658.9,329.9 660,329.9 661.4,365.9 660.3,365.9" fill="#a9a9a9" /><polygon points="664.3,329.7 667.5,329.7 668.9,366 665.7,366" fill="#dcdcdc" /><polygon points="666.4,329.7 667.5,329.7 668.9,366 667.8,366" fill="#a9a9a9" /><polygon points="671.8,330.9 675,330.9 676.4,366.3 673.2,366.3" fill="#dcdcdc" /><polygon points="673.9,330.9 675,330.9 676.4,366.3 675.3,366.3" fill="#a9a9a9" /><polygon points="680.1,330.2 683.3,330.2 684.7,364.8 681.5,364.8" fill="#d4d4d4" /><polygon points="682.2,330.2 683.3,330.2 684.7,364.8 683.6,364.8" fill="#a9a9a9" /><polygon points="687.6,330.9 690.8,330.9 692.2,364.1 689,364.1" fill="#d4d4d4" /><polygon points="689.7,330.9 690.8,330.9 692.2,364.1 691.1,364.1" fill="#a9a9a9" /><polygon points="699.6,330.5 702.8,330.5 704.2,366.9 701,366.9" fill="#dcdcdc" /><polygon points="701.7,330.5 702.8,330.5 704.2,366.9 703.1,366.9" fill="#a9a9a9" /><polygon points="707.1,330.1 710.3,330.1 711.7,364.8 708.5,364.8" fill="#dcdcdc" /><polygon points="709.2,330.1 710.3,330.1 711.7,364.8 710.6,364.8" fill="#a9a9a9" /><polygon points="714.6,331.9 717.8,331.9 719.2,365.5 716,365.5" fill="#d4d4d4" /><polygon points="716.7,331.9 717.8,331.9 719.2,365.5 718.1,365.5" fill="#a9a9a9" /><polygon points="722.1,332.1 725.3,332.1 726.7,366.8 723.5,366.8" fill="#c4c4c4" /><polygon points="724.2,332.1 725.3,332.1 726.7,366.8 725.6,366.8" fill="#a9a9a9" /><polygon points="729.6,332.2 732.8,332.2 734.2,364.6 731,364.6" fill="#c4c4c4" /><polygon points="731.7,332.2 732.8,332.2 734.2,364.6 733.1,364.6" fill="#a9a9a9" /><polygon points="737.9,330.7 741.1,330.7 742.5,365.2 739.3,365.2" fill="#c4c4c4" /><polygon points="740,330.7 741.1,330.7 742.5,365.2 741.4,365.2" fill="#a9a9a9" /><rect x="645" y="348.3" width="5.7" height="2.3" fill="#20b8f8"/><rect x="693.8" y="341.7" width="9.7" height="3" fill="#38d4ff"/><rect x="554.7" y="341.3" width="7.7" height="3.1" fill="#20b8f8"/><rect x="586" y="349.7" width="11.9" height="3.3" fill="#38d4ff"/><rect x="652.6" y="361.9" width="7.2" height="2.6" fill="#20b8f8"/><rect x="568.8" y="355.3" width="4.2" height="2.8" fill="#1890e8"/><rect x="651.9" y="347.2" width="8.1" height="2.3" fill="#20b8f8"/><rect x="524.4" y="360" width="5.8" height="3.4" fill="#20b8f8"/><rect x="557.4" y="339" width="10.2" height="2.3" fill="#38d4ff"/><rect x="677.1" y="358.4" width="9.4" height="3.5" fill="#1890e8"/><rect x="532.3" y="360.1" width="8.6" height="3.1" fill="#20b8f8"/><rect x="560.3" y="357.2" width="5.5" height="3.4" fill="#20b8f8"/><rect x="702.7" y="353.2" width="10.4" height="2" fill="#38d4ff"/><rect x="514.4" y="358.7" width="7.6" height="2.4" fill="#1890e8"/><rect x="700.2" y="344.4" width="5" height="2.7" fill="#38d4ff"/><rect x="702.6" y="361.3" width="6.1" height="2.1" fill="#20b8f8"/><rect x="635.8" y="350.7" width="5.6" height="2.6" fill="#38d4ff"/><rect x="558.4" y="357.3" width="12" height="1.9" fill="#20b8f8"/><rect x="658.3" y="351.2" width="5.5" height="2.7" fill="#1890e8"/><rect x="523" y="357.7" width="7.5" height="2.7" fill="#1890e8"/><rect x="709.6" y="345.4" width="5.7" height="2.2" fill="#38d4ff"/><rect x="679.8" y="355" width="9.1" height="2.5" fill="#20b8f8"/><rect x="712.1" y="358.1" width="4.1" height="2.9" fill="#20b8f8"/><rect x="593" y="339.3" width="9.3" height="2.5" fill="#20b8f8"/><rect x="629.3" y="354.6" width="4.4" height="2.1" fill="#20b8f8"/><rect x="596.3" y="344.3" width="11.7" height="3.6" fill="#20b8f8"/><rect x="552.8" y="361.2" width="6.5" height="2.4" fill="#20b8f8"/><rect x="572.4" y="340" width="6.2" height="3" fill="#38d4ff"/><rect x="609" y="338.1" width="6.1" height="2" fill="#1890e8"/><rect x="626.7" y="347.5" width="6.4" height="2.9" fill="#20b8f8"/><rect x="626.5" y="350.7" width="10" height="3" fill="#1890e8"/><rect x="665.1" y="355.3" width="8" height="2.3" fill="#38d4ff"/><rect x="509.5" y="358" width="11.1" height="2.9" fill="#38d4ff"/><rect x="696.5" y="356.1" width="8.5" height="3.3" fill="#20b8f8"/><rect x="678.5" y="352" width="11.1" height="3" fill="#38d4ff"/><rect x="518.4" y="339" width="9.1" height="3.5" fill="#1890e8"/><rect x="680.5" y="351.4" width="9" height="2.9" fill="#38d4ff"/><rect x="605.7" y="338.1" width="10.4" height="3.1" fill="#20b8f8"/><rect x="642.4" y="339.6" width="9.9" height="2.3" fill="#20b8f8"/><rect x="682.8" y="343.6" width="10.1" height="2.2" fill="#1890e8"/><rect x="606.7" y="347.2" width="7.8" height="3" fill="#20b8f8"/><rect x="633.3" y="353.4" width="4.6" height="2.1" fill="#20b8f8"/><rect x="640.7" y="354.6" width="9" height="2" fill="#1890e8"/><rect x="513.1" y="344.5" width="9.4" height="3" fill="#1890e8"/><rect x="562.8" y="350.4" width="7.7" height="2.6" fill="#20b8f8"/><rect x="714.6" y="351.2" width="6.5" height="2" fill="#1890e8"/><rect x="503.8" y="349" width="10.6" height="3.5" fill="#1890e8"/><rect x="714.7" y="347.3" width="11.3" height="3.5" fill="#20b8f8"/><rect x="625.6" y="341.4" width="8.2" height="3.5" fill="#38d4ff"/><rect x="630.3" y="353.2" width="6.2" height="2" fill="#20b8f8"/><rect x="550" y="359.5" width="7.9" height="1.8" fill="#20b8f8"/><rect x="705.2" y="354.4" width="7.2" height="3.1" fill="#1890e8"/><rect x="574.3" y="345.6" width="10.7" height="1.8" fill="#20b8f8"/><rect x="681.2" y="340.9" width="11.4" height="3.1" fill="#20b8f8"/><rect x="554.7" y="339.6" width="7.1" height="3.4" fill="#20b8f8"/><rect x="577.9" y="348.3" width="6.2" height="1.9" fill="#20b8f8"/><rect x="511.1" y="353.9" width="9.1" height="2.1" fill="#20b8f8"/><rect x="594.2" y="345.6" width="10.2" height="3.2" fill="#1890e8"/><rect x="691" y="357.5" width="9" height="3.4" fill="#38d4ff"/><rect x="655.4" y="339.2" width="9.9" height="2.6" fill="#38d4ff"/><rect x="639.2" y="344.9" width="4.4" height="3.5" fill="#38d4ff"/><rect x="536.9" y="348" width="6.3" height="2.3" fill="#20b8f8"/><rect x="587.7" y="343.7" width="7.9" height="3" fill="#20b8f8"/><rect x="536.1" y="341.9" width="5.7" height="3.4" fill="#1890e8"/><rect x="618.9" y="348.9" width="6.7" height="3.2" fill="#1890e8"/><rect x="530.2" y="342.6" width="4.7" height="2.4" fill="#20b8f8"/><rect x="569" y="346.8" width="10.5" height="2.2" fill="#20b8f8"/><rect x="661.9" y="347.9" width="7.3" height="2.7" fill="#1890e8"/><rect x="558.4" y="356.1" width="8" height="2.8" fill="#20b8f8"/><rect x="527.2" y="350.1" width="9" height="3.4" fill="#38d4ff"/><path d="M601.7 357.5L613.5 359.3" stroke="#30e040" stroke-width="1.2" /><path d="M710.2 356.4L726.9 350.6" stroke="#f0f050" stroke-width="1.2" /><path d="M643.6 354.3L659.6 359.9" stroke="#30e040" stroke-width="1.2" /><path d="M590 345.4L607.3 349.3" stroke="#30e040" stroke-width="1.2" /><path d="M712.5 342L721.6 337.8" stroke="#e0243c" stroke-width="1.2" /><path d="M712.5 338.6L728.7 341" stroke="#30e040" stroke-width="1.2" /><path d="M600.7 354.6L608.7 350.2" stroke="#e0243c" stroke-width="1.2" /><path d="M705.9 351.5L716.9 347" stroke="#30e040" stroke-width="1.2" /><path d="M656.6 346.5L672.2 341.7" stroke="#30e040" stroke-width="1.2" /><path d="M656.1 350L668 346.7" stroke="#e0243c" stroke-width="1.2" /><path d="M590.1 348.9L608.1 346.2" stroke="#30e040" stroke-width="1.2" /><path d="M671.2 357.2L684 354" stroke="#f0f050" stroke-width="1.2" /><path d="M608 363.8H701" stroke="#e02020" stroke-width="2.4"/><path d="M335 346L400 340L470 336" stroke="#f0f050" stroke-width="2.2" fill="none"/><path d="M335 349L400 342.4L470 337.8" stroke="#30e040" stroke-width="2" fill="none"/><path d="M335 352L400 344.8L470 339.6" stroke="#1038d8" stroke-width="2.4" fill="none"/><path d="M335 355L400 347.2L470 341.4" stroke="#e0243c" stroke-width="1.8" fill="none"/><path d="M335 358L400 349.6L470 343.2" stroke="#f0f050" stroke-width="2.2" fill="none"/><path d="M335 361L400 352L470 345" stroke="#30e040" stroke-width="1.8" fill="none"/><path d="M340 362L360 352L385 358L395 346L430 342M420 352L445 340L470 350L500 345Q490 356 455 362L410 366" stroke="#f0f050" stroke-width="2.2" fill="none"/><path d="M360 360L380 346M400 362L415 348M440 364Q480 358 494 346" stroke="#30e040" stroke-width="2" fill="none"/><path d="M335 366L352 356M420 360L432 366M470 352L480 362" stroke="#e0243c" stroke-width="1.8" fill="none"/><polygon points="579,223 580,223 594.4,366 589.6,366" fill="#1038d8" /><polygon points="497.2,246 498.2,246 507.4,312 503.6,312" fill="#1038d8" /><polygon points="491.9,264.5 492.9,264.5 499.8,316 496.2,316" fill="#1038d8" /><polygon points="422.1,273.6 423.1,273.6 429.5,312 425.9,312" fill="#1038d8" /><polygon points="464.9,296 465.9,296 469.3,312 465.7,312" fill="#1038d8" /><polygon points="542,273.6 543,273.6 548.5,310 544.9,310" fill="#1038d8" /><polygon points="595.5,275 596.5,275 600.6,312 597.4,312" fill="#1038d8" /><polygon points="525.5,292 526.5,292 529.6,310 526.4,310" fill="#1038d8" /><polygon points="561.5,295 562.5,295 566.6,314 563.4,314" fill="#1038d8" /><polygon points="665.5,296 666.5,296 669.4,322 666.6,322" fill="#1038d8" /><polygon points="687.5,296 688.5,296 691.4,324 688.6,324" fill="#1038d8" /><polygon points="711.5,290 712.5,290 715.4,326 712.6,326" fill="#1038d8" /><polygon points="702.5,322 703.5,322 706.3,334 703.7,334" fill="#1038d8" /><rect x="364" y="310.5" width="43" height="2.6" fill="#1038d8"/><rect x="427" y="309.5" width="41" height="2.5" fill="#1038d8"/><rect x="452" y="311.5" width="44" height="2.6" fill="#1038d8"/><rect x="505" y="308" width="43" height="2.5" fill="#1038d8"/><rect x="562" y="308.5" width="40" height="2.5" fill="#1038d8"/><rect x="510" y="331" width="37" height="3" fill="#1038d8"/><rect x="656" y="330.5" width="66" height="3" fill="#1038d8"/><rect x="600" y="322" width="22" height="2" fill="#1038d8"/><rect x="510" y="309" width="2.4" height="24" fill="#1038d8"/><rect x="545" y="309" width="2.4" height="24" fill="#1038d8"/><rect x="657" y="314" width="2.4" height="20" fill="#1038d8"/><rect x="672" y="318" width="2.4" height="16" fill="#1038d8"/><rect x="690" y="314" width="2.4" height="20" fill="#1038d8"/><rect x="706" y="318" width="2.4" height="16" fill="#1038d8"/><rect x="718" y="314" width="2.4" height="20" fill="#1038d8"/><rect x="600" y="309" width="2.4" height="14" fill="#1038d8"/><rect x="622" y="309" width="2.4" height="14" fill="#1038d8"/><polygon points="335,312 339,312 347,340 335,340" fill="#c81c10" /><path d="M335 320l8 8M343 318l-8 10M335 330l10 8" stroke="#f0d0c8" stroke-width="0.8"/><polygon points="748.5,335 786.5,331 787,348 750,359" fill="#0a28f0" /><polygon points="760,332 780,330 780,334 760,336" fill="#0820d0" /><polygon points="730.3,217 737.5,222 742.2,262 733.9,257" fill="#f01818" /><polygon points="733.9,257 742.2,262 747.2,304 737.8,299" fill="#f4f4f4" /><polygon points="737.8,299 747.2,304 751.5,341 741.2,336" fill="#f01818" /><polygon points="741.2,336 751.5,341 754.9,369 743.8,364" fill="#f4f4f4" /><polygon points="713.5,151 727.2,151 728.9,170 714,170" fill="#b8401c" /><path d="M715.5 152.5L726.9 168.5M725.2 152.5L716 168.5" stroke="#b8401c" stroke-width="0" fill="none"/><polygon points="717.5,153.2 723.2,153.2 720.4,159.5" fill="#648bc8" opacity="0.75"/><polygon points="717.5,167.8 723.2,167.8 720.4,161.5" fill="#648bc8" opacity="0.75"/><polygon points="715.6,155 715.6,166 718.9,160.5" fill="#648bc8" opacity="0.75"/><polygon points="726.3,155 726.3,166 721.9,160.5" fill="#648bc8" opacity="0.75"/><polygon points="714,170 728.9,170 733.3,217 715.4,217" fill="#dcdcdc" /><path d="M716 171.5L728.4 184.2M726.9 171.5L716.5 184.2" stroke="#dcdcdc" stroke-width="0" fill="none"/><polygon points="718.4,172.2 724.6,172.2 721.5,176.8" fill="#648bc8" opacity="0.75"/><polygon points="718.4,183.5 724.6,183.5 721.5,178.8" fill="#648bc8" opacity="0.75"/><polygon points="716.1,174 716.1,181.7 720,177.8" fill="#648bc8" opacity="0.75"/><polygon points="727.9,174 727.9,181.7 723,177.8" fill="#648bc8" opacity="0.75"/><path d="M716.5 187.2L729.8 199.8M728.4 187.2L716.9 199.8" stroke="#dcdcdc" stroke-width="0" fill="none"/><polygon points="719.2,187.9 725.7,187.9 722.4,192.5" fill="#648bc8" opacity="0.75"/><polygon points="719.2,199.1 725.7,199.1 722.4,194.5" fill="#648bc8" opacity="0.75"/><polygon points="716.5,189.7 716.5,197.3 720.9,193.5" fill="#648bc8" opacity="0.75"/><polygon points="729.3,189.7 729.3,197.3 723.9,193.5" fill="#648bc8" opacity="0.75"/><path d="M716.9 202.8L731.3 215.5M729.8 202.8L717.4 215.5" stroke="#dcdcdc" stroke-width="0" fill="none"/><polygon points="719.9,203.5 726.9,203.5 723.4,208.2" fill="#648bc8" opacity="0.75"/><polygon points="719.9,214.8 726.9,214.8 723.4,210.2" fill="#648bc8" opacity="0.75"/><polygon points="717,205.3 717,213 721.9,209.2" fill="#648bc8" opacity="0.75"/><polygon points="730.7,205.3 730.7,213 724.9,209.2" fill="#648bc8" opacity="0.75"/><polygon points="715.4,217 733.3,217 736.9,257 716.5,257" fill="#b8401c" /><path d="M717.4 218.5L732.5 228.8M731.3 218.5L717.8 228.8" stroke="#b8401c" stroke-width="0" fill="none"/><polygon points="720.7,219.2 728,219.2 724.3,222.7" fill="#648bc8" opacity="0.75"/><polygon points="720.7,228.1 728,228.1 724.3,224.7" fill="#648bc8" opacity="0.75"/><polygon points="717.4,221 717.4,226.3 722.8,223.7" fill="#648bc8" opacity="0.75"/><polygon points="732.1,221 732.1,226.3 725.8,223.7" fill="#648bc8" opacity="0.75"/><path d="M717.8 231.8L733.7 242.2M732.5 231.8L718.1 242.2" stroke="#b8401c" stroke-width="0" fill="none"/><polygon points="721.3,232.5 729,232.5 725.1,236" fill="#648bc8" opacity="0.75"/><polygon points="721.3,241.5 729,241.5 725.1,238" fill="#648bc8" opacity="0.75"/><polygon points="717.8,234.3 717.8,239.7 723.6,237" fill="#648bc8" opacity="0.75"/><polygon points="733.3,234.3 733.3,239.7 726.6,237" fill="#648bc8" opacity="0.75"/><path d="M718.1 245.2L734.9 255.5M733.7 245.2L718.5 255.5" stroke="#b8401c" stroke-width="0" fill="none"/><polygon points="721.9,245.9 729.9,245.9 725.9,249.3" fill="#648bc8" opacity="0.75"/><polygon points="721.9,254.8 729.9,254.8 725.9,251.3" fill="#648bc8" opacity="0.75"/><polygon points="718.1,247.7 718.1,253 724.4,250.3" fill="#648bc8" opacity="0.75"/><polygon points="734.5,247.7 734.5,253 727.4,250.3" fill="#648bc8" opacity="0.75"/><polygon points="716.5,257 736.9,257 740.8,299 717.7,299" fill="#dcdcdc" /><path d="M718.5 258.5L736.2 269.5M734.9 258.5L718.9 269.5" stroke="#dcdcdc" stroke-width="0" fill="none"/><polygon points="722.6,259.2 730.9,259.2 726.7,263" fill="#648bc8" opacity="0.75"/><polygon points="722.6,268.8 730.9,268.8 726.7,265" fill="#648bc8" opacity="0.75"/><polygon points="718.5,261 718.5,267 725.2,264" fill="#648bc8" opacity="0.75"/><polygon points="735.8,261 735.8,267 728.2,264" fill="#648bc8" opacity="0.75"/><path d="M718.9 272.5L737.5 283.5M736.2 272.5L719.3 283.5" stroke="#dcdcdc" stroke-width="0" fill="none"/><polygon points="723.2,273.2 731.9,273.2 727.6,277" fill="#648bc8" opacity="0.75"/><polygon points="723.2,282.8 731.9,282.8 727.6,279" fill="#648bc8" opacity="0.75"/><polygon points="718.9,275 718.9,281 726.1,278" fill="#648bc8" opacity="0.75"/><polygon points="737.1,275 737.1,281 729.1,278" fill="#648bc8" opacity="0.75"/><path d="M719.3 286.5L738.8 297.5M737.5 286.5L719.7 297.5" stroke="#dcdcdc" stroke-width="0" fill="none"/><polygon points="723.9,287.2 732.9,287.2 728.4,291" fill="#648bc8" opacity="0.75"/><polygon points="723.9,296.8 732.9,296.8 728.4,293" fill="#648bc8" opacity="0.75"/><polygon points="719.3,289 719.3,295 726.9,292" fill="#648bc8" opacity="0.75"/><polygon points="738.4,289 738.4,295 729.9,292" fill="#648bc8" opacity="0.75"/><polygon points="717.7,299 740.8,299 744.2,336 718.8,336" fill="#b8401c" /><path d="M719.7 300.5L739.9 309.8M738.8 300.5L720.1 309.8" stroke="#b8401c" stroke-width="0" fill="none"/><polygon points="724.6,301.2 734,301.2 729.3,304.2" fill="#648bc8" opacity="0.75"/><polygon points="724.6,309.1 734,309.1 729.3,306.2" fill="#648bc8" opacity="0.75"/><polygon points="719.7,303 719.7,307.3 727.8,305.2" fill="#648bc8" opacity="0.75"/><polygon points="739.6,303 739.6,307.3 730.8,305.2" fill="#648bc8" opacity="0.75"/><path d="M720.1 312.8L741.1 322.2M739.9 312.8L720.4 322.2" stroke="#b8401c" stroke-width="0" fill="none"/><polygon points="725.2,313.5 734.9,313.5 730,316.5" fill="#648bc8" opacity="0.75"/><polygon points="725.2,321.5 734.9,321.5 730,318.5" fill="#648bc8" opacity="0.75"/><polygon points="720.1,315.3 720.1,319.7 728.5,317.5" fill="#648bc8" opacity="0.75"/><polygon points="740.7,315.3 740.7,319.7 731.5,317.5" fill="#648bc8" opacity="0.75"/><path d="M720.4 325.2L742.2 334.5M741.1 325.2L720.8 334.5" stroke="#b8401c" stroke-width="0" fill="none"/><polygon points="725.7,325.9 735.8,325.9 730.8,328.8" fill="#4f3d00" opacity="0.75"/><polygon points="725.7,333.8 735.8,333.8 730.8,330.8" fill="#4f3d00" opacity="0.75"/><polygon points="720.4,327.7 720.4,332 729.3,329.8" fill="#4f3d00" opacity="0.75"/><polygon points="741.8,327.7 741.8,332 732.3,329.8" fill="#4f3d00" opacity="0.75"/><polygon points="718.8,336 744.2,336 747.5,372 719.8,372" fill="#dcdcdc" /><path d="M720.8 337.5L743.3 346.5M742.2 337.5L721.1 346.5" stroke="#dcdcdc" stroke-width="0" fill="none"/><polygon points="726.3,338.2 736.7,338.2 731.5,341" fill="#4f3d00" opacity="0.75"/><polygon points="726.3,345.8 736.7,345.8 731.5,343" fill="#4f3d00" opacity="0.75"/><polygon points="720.8,340 720.8,344 730,342" fill="#4f3d00" opacity="0.75"/><polygon points="743,340 743,344 733,342" fill="#4f3d00" opacity="0.75"/><path d="M721.1 349.5L744.4 358.5M743.3 349.5L721.5 358.5" stroke="#dcdcdc" stroke-width="0" fill="none"/><polygon points="726.9,350.2 737.5,350.2 732.2,353" fill="#4f3d00" opacity="0.75"/><polygon points="726.9,357.8 737.5,357.8 732.2,355" fill="#4f3d00" opacity="0.75"/><polygon points="721.1,352 721.1,356 730.7,354" fill="#4f3d00" opacity="0.75"/><polygon points="744.1,352 744.1,356 733.7,354" fill="#4f3d00" opacity="0.75"/><path d="M721.5 361.5L745.5 370.5M744.4 361.5L721.8 370.5" stroke="#dcdcdc" stroke-width="0" fill="none"/><polygon points="727.5,362.2 738.4,362.2 732.9,365" fill="#4f3d00" opacity="0.75"/><polygon points="727.5,369.8 738.4,369.8 732.9,367" fill="#4f3d00" opacity="0.75"/><polygon points="721.4,364 721.4,368 731.4,366" fill="#4f3d00" opacity="0.75"/><polygon points="745.2,364 745.2,368 734.4,366" fill="#4f3d00" opacity="0.75"/><polygon points="719.8,372 747.5,372 752.1,422 721.2,422" fill="#b8401c" /><path d="M721.8 373.5L746.7 383M745.5 373.5L722.2 383" stroke="#b8401c" stroke-width="0" fill="none"/><polygon points="728,374.2 739.3,374.2 733.7,377.2" fill="#4f3d00" opacity="0.75"/><polygon points="728,382.3 739.3,382.3 733.7,379.2" fill="#4f3d00" opacity="0.75"/><polygon points="721.8,376 721.8,380.5 732.2,378.2" fill="#4f3d00" opacity="0.75"/><polygon points="746.3,376 746.3,380.5 735.2,378.2" fill="#4f3d00" opacity="0.75"/><path d="M722.2 386L747.8 395.5M746.7 386L722.5 395.5" stroke="#b8401c" stroke-width="0" fill="none"/><polygon points="728.6,386.7 740.2,386.7 734.4,389.8" fill="#4f3d00" opacity="0.75"/><polygon points="728.6,394.8 740.2,394.8 734.4,391.8" fill="#4f3d00" opacity="0.75"/><polygon points="722.1,388.5 722.1,393 732.9,390.8" fill="#4f3d00" opacity="0.75"/><polygon points="747.4,388.5 747.4,393 735.9,390.8" fill="#4f3d00" opacity="0.75"/><path d="M722.5 398.5L749 408M747.8 398.5L722.9 408" stroke="#b8401c" stroke-width="0" fill="none"/><polygon points="729.2,399.2 741.1,399.2 735.2,402.2" fill="#4f3d00" opacity="0.75"/><polygon points="729.2,407.3 741.1,407.3 735.2,404.2" fill="#4f3d00" opacity="0.75"/><polygon points="722.5,401 722.5,405.5 733.7,403.2" fill="#4f3d00" opacity="0.75"/><polygon points="748.6,401 748.6,405.5 736.7,403.2" fill="#4f3d00" opacity="0.75"/><path d="M722.9 411L750.1 420.5M749 411L723.2 420.5" stroke="#b8401c" stroke-width="0" fill="none"/><polygon points="729.8,411.7 742,411.7 735.9,414.8" fill="#4f3d00" opacity="0.75"/><polygon points="729.8,419.8 742,419.8 735.9,416.8" fill="#4f3d00" opacity="0.75"/><polygon points="722.9,413.5 722.9,418 734.4,415.8" fill="#4f3d00" opacity="0.75"/><polygon points="749.7,413.5 749.7,418 737.4,415.8" fill="#4f3d00" opacity="0.75"/><polygon points="336,376 679.5,374 679.5,390 336,388" fill="#0830f0" /><polygon points="336,386.5 679.5,388.5 679.5,390.5 336,388.5" fill="#0420b0" /><polygon points="446,380 451.2,380 463.2,463 458,463" fill="#c6c6c6" /><polygon points="449.1,380 451.2,380 463.2,463 461.1,463" fill="#a6a6a6" /><polygon points="462,380 467,380 476.5,452 471.5,452" fill="#c6c6c6" /><polygon points="465,380 467,380 476.5,452 474.5,452" fill="#a6a6a6" /><polygon points="476,380 480.8,380 488.3,442 483.5,442" fill="#c6c6c6" /><polygon points="478.9,380 480.8,380 488.3,442 486.4,442" fill="#a6a6a6" /><polygon points="590,376 595.2,376 602.2,457 597,457" fill="#c6c6c6" /><polygon points="593.1,376 595.2,376 602.2,457 600.1,457" fill="#a6a6a6" /><polygon points="596.5,376 601,376 607,446 602.5,446" fill="#c6c6c6" /><polygon points="599.2,376 601,376 607,446 605.2,446" fill="#a6a6a6" /><polygon points="601.8,376 605.8,376 610,435.5 606,435.5" fill="#c6c6c6" /><polygon points="604.2,376 605.8,376 610,435.5 608.4,435.5" fill="#a6a6a6" /><polygon points="680,374 685,374 691,452.5 686,452.5" fill="#c6c6c6" /><polygon points="683,374 685,374 691,452.5 689,452.5" fill="#a6a6a6" /><polygon points="699,374 703.5,374 709,440 704.5,440" fill="#c6c6c6" /><polygon points="701.7,374 703.5,374 709,440 707.2,440" fill="#a6a6a6" /><polygon points="716,372 720,372 723,431 719,431" fill="#c6c6c6" /><polygon points="718.4,372 720,372 723,431 721.4,431" fill="#a6a6a6" /><polygon points="359.5,382 364,382 371.5,423 367,423" fill="#c6c6c6" /><polygon points="362.2,382 364,382 371.5,423 369.7,423" fill="#a6a6a6" /><polygon points="349,382 353.2,382 359.2,413 355,413" fill="#c6c6c6" /><polygon points="351.5,382 353.2,382 359.2,413 357.5,413" fill="#a6a6a6" /><polygon points="397.5,382 402,382 408.5,411 404,411" fill="#c6c6c6" /><polygon points="400.2,382 402,382 408.5,411 406.7,411" fill="#a6a6a6" /><polygon points="384,382 388,382 392,395 388,395" fill="#c6c6c6" /><polygon points="386.4,382 388,382 392,395 390.4,395" fill="#a6a6a6" /><polygon points="427,382 431,382 435.5,394 431.5,394" fill="#c6c6c6" /><polygon points="429.4,382 431,382 435.5,394 433.9,394" fill="#a6a6a6" /><polygon points="335,408 339,408 344.5,446 340.5,446" fill="#c6c6c6" /><polygon points="337.4,408 339,408 344.5,446 342.9,446" fill="#a6a6a6" /><polygon points="718.5,372 747,372 750,421 722,421" fill="#c03c14" /><path d="M721 372L748 381.8M748 372L721 381.8M720 372H749" stroke="#4f3d00" stroke-width="2.2" opacity="0.8"/><path d="M721 381.8L748 391.6M748 381.8L721 391.6M720 381.8H749" stroke="#4f3d00" stroke-width="2.2" opacity="0.8"/><path d="M721 391.6L748 401.4M748 391.6L721 401.4M720 391.6H749" stroke="#4f3d00" stroke-width="2.2" opacity="0.8"/><path d="M721 401.4L748 411.2M748 401.4L721 411.2M720 401.4H749" stroke="#4f3d00" stroke-width="2.2" opacity="0.8"/><path d="M721 411.2L748 421M748 411.2L721 421M720 411.2H749" stroke="#4f3d00" stroke-width="2.2" opacity="0.8"/><path d="M335 367.5 L450 365.3 L560 363.3 L700 363.6 L806 364.5" stroke="#e82828" stroke-width="1.5" fill="none"/><path d="M335 369.1 L450 366.8 L560 364.7 L700 364.9 L806 365.7" stroke="#f0f040" stroke-width="2" fill="none"/><path d="M335 370.8 L450 368.2 L560 366 L700 366.2 L806 366.9" stroke="#30e040" stroke-width="1.6" fill="none"/><path d="M335 372.4 L450 369.7 L560 367.4 L700 367.5 L806 368.1" stroke="#f0f040" stroke-width="2" fill="none"/><path d="M335 374.1 L450 371.1 L560 368.7 L700 368.9 L806 369.2" stroke="#e82828" stroke-width="1.5" fill="none"/><path d="M335 375.7 L450 372.6 L560 370.1 L700 370.2 L806 370.4" stroke="#f0f040" stroke-width="2" fill="none"/><path d="M335 377.4 L450 374 L560 371.4 L700 371.5 L806 371.6" stroke="#30e040" stroke-width="1.5" fill="none"/><path d="M335 379 L450 375.5 L560 372.8 L700 372.8 L806 372.8" stroke="#f0f040" stroke-width="1.8" fill="none"/><path d="M335 381.5L430 378.5M335 384L410 381.5" stroke="#f0f040" stroke-width="1.6" fill="none"/><path d="M335 382.8L420 380" stroke="#30e040" stroke-width="1.2" fill="none"/><path d="M421 372.4Q449 406.5 477 369.4" stroke="#f0f040" stroke-width="1.8" fill="none"/><path d="M424 372.4Q449 401.9 474 369.4" stroke="#30e040" stroke-width="1.8" fill="none"/><path d="M427 372.4Q449 397.2 471 369.4" stroke="#e82828" stroke-width="1.8" fill="none"/><path d="M430 372.4Q449 392.6 468 369.4" stroke="#f0f040" stroke-width="1.8" fill="none"/><path d="M433 372.4Q449 387.9 465 369.4" stroke="#1038d8" stroke-width="1.8" fill="none"/><polygon points="439,373.4 475,363.4 477,367.4 443,378.4" fill="#1038d8" /><path d="M565 369.9Q593 404 621 366.9" stroke="#f0f040" stroke-width="1.8" fill="none"/><path d="M568 369.9Q593 399.3 618 366.9" stroke="#30e040" stroke-width="1.8" fill="none"/><path d="M571 369.9Q593 394.7 615 366.9" stroke="#e82828" stroke-width="1.8" fill="none"/><path d="M574 369.9Q593 390 612 366.9" stroke="#f0f040" stroke-width="1.8" fill="none"/><path d="M577 369.9Q593 385.4 609 366.9" stroke="#1038d8" stroke-width="1.8" fill="none"/><polygon points="583,370.9 619,360.9 621,364.9 587,375.9" fill="#1038d8" /><path d="M655 369.9Q683 404 711 366.9" stroke="#f0f040" stroke-width="1.8" fill="none"/><path d="M658 369.9Q683 399.4 708 366.9" stroke="#30e040" stroke-width="1.8" fill="none"/><path d="M661 369.9Q683 394.7 705 366.9" stroke="#e82828" stroke-width="1.8" fill="none"/><path d="M664 369.9Q683 390.1 702 366.9" stroke="#f0f040" stroke-width="1.8" fill="none"/><path d="M667 369.9Q683 385.4 699 366.9" stroke="#1038d8" stroke-width="1.8" fill="none"/><polygon points="673,370.9 709,360.9 711,364.9 677,375.9" fill="#1038d8" /><path d="M340.5 384Q346 400 335 408" stroke="#30e040" stroke-width="2" fill="none"/><path d="M345.5 384Q351 397 341 403" stroke="#e82828" stroke-width="1.8" fill="none"/><polygon points="335,466.8 343.7,465 394.3,437.4 395.6,444.3 345.4,471 335,471.7" fill="#b4b4b4" /><path d="M350 461.6L350.8 468.1" stroke="#8e8e8e" stroke-width="1" /><path d="M360 456.1L360.8 462.6" stroke="#8e8e8e" stroke-width="1" /><path d="M370 450.7L370.8 457.2" stroke="#8e8e8e" stroke-width="1" /><path d="M380 445.2L380.8 451.7" stroke="#8e8e8e" stroke-width="1" /><path d="M390 439.8L390.8 446.3" stroke="#8e8e8e" stroke-width="1" /><polygon points="339.8,425.3 392.1,424 394.3,437.4 343.7,465 335,466.8 335,448.7 352.3,441.7 342.8,440" fill="#0a30f0" /><polygon points="335,448.7 340,447 343.7,465 335,466.8" fill="#0418c8" /><path d="M355 426L357.5 457.5" stroke="#0420c0" stroke-width="1" /><path d="M366 426L368.5 451.5" stroke="#0420c0" stroke-width="1" /><path d="M377 426L379.5 445.5" stroke="#0420c0" stroke-width="1" /><path d="M386 426L388.5 440.6" stroke="#0420c0" stroke-width="1" /><path d="M387 422.7L415.5 408.4" stroke="#3a5a9c" stroke-width="2" /><polygon points="335,474 613.5,467 335,611" fill="#404040" /><path d="M335 522Q398 518 392.5 532Q384 549 335 564Z" fill="#4f3d00"/><polygon points="500.6,593 448.7,635.5 574,641 574,654 1518,674 1518,640 505,622" fill="#245600" /><polygon points="803,404 567,579 1518,593 1518,560 806,430" fill="#245600" /><polygon points="806,421.5 647.6,556.5 1518,571 1518,500 806,494" fill="#404040" /><polygon points="492.8,571.8 806,380.5 806,402.5 567,579.5 575,582 1518,592 1518,639 505,622" fill="#0404fb" /><polygon points="1026,207.5 1078.5,151 1154,151 1148,273 1026,280" fill="#b3b3b3" /><clipPath id="cub"><polygon points="1026,207.5 1078.5,151 1154,151 1148,273 1026,280"/></clipPath><g clip-path="url(#cub)"><polygon points="1064,215.3 1134,171.3 1134,182.2 1064,221.9" fill="#6fa8c8" /><polygon points="1064,239.6 1131,212.5 1131,223.2 1064,246.3" fill="#6fa8c8" /><polygon points="1062,264.9 1129,253.1 1129,262.8 1062,270.9" fill="#6fa8c8" /><polygon points="1040,218.3 1050,210.6 1050,214.5 1040,221.8" fill="#6fa8c8" /><polygon points="1028,263.8 1046,258.9 1046,262.6 1028,266.8" fill="#6fa8c8" /><polygon points="1029,274.1 1046,271.9 1046,275.5 1029,277.1" fill="#6fa8c8" /><polygon points="1028,232 1036,226.3 1036,246 1028,249.8" fill="#00807e" /><polygon points="1036,233.7 1041,230.6 1041,240.2 1036,242.8" fill="#00807e" /><polygon points="1041,212.3 1045,209 1045,232.7 1041,235" fill="#00807e" /><polygon points="1040,252.8 1047,250.3 1047,273.6 1040,274.4" fill="#00807e" /><polygon points="1057,222.8 1062,219.8 1062,230.7 1057,233.2" fill="#00807e" /><polygon points="1053,188.4 1057,184.5 1057,191.7 1053,195.4" fill="#00807e" /><polygon points="1027,244.4 1030,242.8 1030,258 1027,259" fill="#00807e" /><polygon points="1034,261.4 1040,259.7 1040,275.2 1034,275.8" fill="#00807e" /><polygon points="1045,223.6 1048,221.6 1048,240.5 1045,241.8" fill="#00807e" /><path d="M1026 212.6L1153 85.2" stroke="#d8d8d8" stroke-width="0.9" /><path d="M1026 217.8L1153 99.6" stroke="#d8d8d8" stroke-width="0.9" /><path d="M1026 222.9L1153 114" stroke="#d8d8d8" stroke-width="0.9" /><path d="M1026 228.1L1153 128.3" stroke="#d8d8d8" stroke-width="0.9" /><path d="M1026 233.2L1153 142.7" stroke="#d8d8d8" stroke-width="0.9" /><path d="M1026 238.4L1153 157.1" stroke="#d8d8d8" stroke-width="0.9" /><path d="M1026 243.5L1153 171.4" stroke="#d8d8d8" stroke-width="0.9" /><path d="M1026 248.6L1153 185.8" stroke="#d8d8d8" stroke-width="0.9" /><path d="M1026 253.8L1153 200.2" stroke="#d8d8d8" stroke-width="0.9" /><path d="M1026 258.9L1153 214.5" stroke="#d8d8d8" stroke-width="0.9" /><path d="M1026 264.1L1153 228.9" stroke="#d8d8d8" stroke-width="0.9" /><path d="M1026 269.2L1153 243.3" stroke="#d8d8d8" stroke-width="0.9" /><path d="M1026 274.4L1153 257.6" stroke="#d8d8d8" stroke-width="0.9" /><path d="M1035.4 140L1034.9 282" stroke="#d8d8d8" stroke-width="0.9" /><path d="M1044.8 140L1044.3 282" stroke="#d8d8d8" stroke-width="0.9" /><path d="M1054.2 140L1053.7 282" stroke="#d8d8d8" stroke-width="0.9" /><path d="M1063.6 140L1063.1 282" stroke="#d8d8d8" stroke-width="0.9" /><path d="M1073 140L1072.5 282" stroke="#d8d8d8" stroke-width="0.9" /><path d="M1082.4 140L1081.9 282" stroke="#d8d8d8" stroke-width="0.9" /><path d="M1091.8 140L1091.3 282" stroke="#d8d8d8" stroke-width="0.9" /><path d="M1101.2 140L1100.7 282" stroke="#d8d8d8" stroke-width="0.9" /><path d="M1110.6 140L1110.1 282" stroke="#d8d8d8" stroke-width="0.9" /><path d="M1120 140L1119.5 282" stroke="#d8d8d8" stroke-width="0.9" /><path d="M1129.4 140L1128.9 282" stroke="#d8d8d8" stroke-width="0.9" /><path d="M1138.8 140L1138.3 282" stroke="#d8d8d8" stroke-width="0.9" /><path d="M1148.2 140L1147.7 282" stroke="#d8d8d8" stroke-width="0.9" /></g><polygon points="1025.5,206 1077,151 1080.5,151 1027.5,209.5" fill="#8c8c3e" /><polygon points="1153,151 1518,151 1518,517.2 1137,511.3 1139.7,400 1147,272" fill="#9f9f9f" /><polygon points="803.5,308 1147,272 1139.7,400 1137,511.3 807,507" fill="#a8a8a8" /><clipPath id="cw2"><polygon points="804.5,309 1147,273 1139.7,400 1137,511 807,507"/></clipPath><g clip-path="url(#cw2)"><path d="M800 292L1150 291.5" stroke="#c6c6c6" stroke-width="0.9" /><path d="M800 305.5L1150 305" stroke="#c6c6c6" stroke-width="0.9" /><path d="M800 320L1150 319.5" stroke="#c6c6c6" stroke-width="0.9" /><path d="M800 334.5L1150 334" stroke="#c6c6c6" stroke-width="0.9" /><path d="M800 348.4L1150 347.9" stroke="#c6c6c6" stroke-width="0.9" /><path d="M800 362L1150 361.5" stroke="#c6c6c6" stroke-width="0.9" /><path d="M800 375.4L1150 374.9" stroke="#c6c6c6" stroke-width="0.9" /><path d="M800 389L1150 388.5" stroke="#c6c6c6" stroke-width="0.9" /><path d="M800 403L1150 402.5" stroke="#c6c6c6" stroke-width="0.9" /><path d="M800 416L1150 415.5" stroke="#c6c6c6" stroke-width="0.9" /><path d="M800 429L1150 428.5" stroke="#c6c6c6" stroke-width="0.9" /><path d="M800 442.3L1150 441.8" stroke="#c6c6c6" stroke-width="0.9" /><path d="M800 455.4L1150 454.9" stroke="#c6c6c6" stroke-width="0.9" /><path d="M800 468L1150 467.5" stroke="#c6c6c6" stroke-width="0.9" /><path d="M800 481.4L1150 480.9" stroke="#c6c6c6" stroke-width="0.9" /><path d="M800 494L1150 493.5" stroke="#c6c6c6" stroke-width="0.9" /><path d="M894 270L895.5 510" stroke="#c8c8c8" stroke-width="0.8" stroke-dasharray="2 1"/><path d="M974.5 270L972 510" stroke="#c8c8c8" stroke-width="0.8" stroke-dasharray="2 1"/><path d="M1059 270L1052.5 510" stroke="#c8c8c8" stroke-width="0.8" stroke-dasharray="2 1"/></g><path d="M1147 272L1139.7 400" stroke="#cfcfcf" stroke-width="1" /><path d="M1139.7 400L1137 508" stroke="#cfcfcf" stroke-width="1" /><path d="M805 309L808 507" stroke="#d4d4d4" stroke-width="1.6" /><clipPath id="cw1"><polygon points="1153,151 1518,151 1518,520 1137,511 1139.7,400 1147,272"/></clipPath><g clip-path="url(#cw1)"><path d="M1140 155.3L1518 157.3" stroke="#c2c2c2" stroke-width="0.9" /><path d="M1140 170.2L1518 172" stroke="#c2c2c2" stroke-width="0.9" /><path d="M1140 185.4L1518 187" stroke="#c2c2c2" stroke-width="0.9" /><path d="M1140 200.9L1518 202.3" stroke="#c2c2c2" stroke-width="0.9" /><path d="M1140 216L1518 217.3" stroke="#c2c2c2" stroke-width="0.9" /><path d="M1140 231.3L1518 232.4" stroke="#c2c2c2" stroke-width="0.9" /><path d="M1140 246.2L1518 247.1" stroke="#c2c2c2" stroke-width="0.9" /><path d="M1140 261.4L1518 262.1" stroke="#c2c2c2" stroke-width="0.9" /><path d="M1140 276L1518 276.5" stroke="#c2c2c2" stroke-width="0.9" /><path d="M1140 290.8L1518 291.2" stroke="#c2c2c2" stroke-width="0.9" /><path d="M1140 305.5L1518 305.7" stroke="#c2c2c2" stroke-width="0.9" /><path d="M1140 319.5L1518 319.5" stroke="#c2c2c2" stroke-width="0.9" /><path d="M1140 333.7L1518 333.7" stroke="#c2c2c2" stroke-width="0.9" /><path d="M1140 347.2L1518 347.2" stroke="#c2c2c2" stroke-width="0.9" /><path d="M1140 362L1518 362" stroke="#c2c2c2" stroke-width="0.9" /><path d="M1140 375.4L1518 375.4" stroke="#c2c2c2" stroke-width="0.9" /><path d="M1140 388.9L1518 388.9" stroke="#c2c2c2" stroke-width="0.9" /><path d="M1140 403L1518 403" stroke="#c2c2c2" stroke-width="0.9" /><path d="M1140 416L1518 416" stroke="#c2c2c2" stroke-width="0.9" /><path d="M1140 429L1518 429" stroke="#c2c2c2" stroke-width="0.9" /><path d="M1140 442.3L1518 442.3" stroke="#c2c2c2" stroke-width="0.9" /><path d="M1140 455.4L1518 455.4" stroke="#c2c2c2" stroke-width="0.9" /><path d="M1140 468L1518 468" stroke="#c2c2c2" stroke-width="0.9" /><path d="M1140 481.4L1518 481.4" stroke="#c2c2c2" stroke-width="0.9" /><path d="M1140 494L1518 494" stroke="#c2c2c2" stroke-width="0.9" /><path d="M1246 151L1232 510" stroke="#b4b4b4" stroke-width="0.7" stroke-dasharray="2 1"/><path d="M1393 151L1398 510" stroke="#b4b4b4" stroke-width="0.7" stroke-dasharray="2 1"/><polygon points="1259.7,155.3 1518,156.8 1516.5,169.5 1258.2,168" fill="#3f9db6" /><rect x="1294.2" y="156.5" width="5.5" height="10.7" fill="#4aa8c0"/><rect x="1304.7" y="156.6" width="8.2" height="10.7" fill="#3793ac"/><rect x="1316.4" y="156.6" width="4.4" height="10.7" fill="#56b0c6"/><rect x="1322.9" y="156.7" width="8.3" height="10.7" fill="#2a86a0"/><rect x="1335.3" y="156.7" width="7.3" height="10.7" fill="#56b0c6"/><rect x="1348.2" y="156.8" width="3.4" height="10.7" fill="#3793ac"/><rect x="1354.5" y="156.8" width="4.5" height="10.7" fill="#3793ac"/><rect x="1360.3" y="156.9" width="3.4" height="10.7" fill="#4aa8c0"/><rect x="1397.2" y="157.1" width="5.6" height="10.7" fill="#2a86a0"/><rect x="1404.4" y="157.1" width="3.5" height="10.7" fill="#2f8ca6"/><rect x="1413.7" y="157.2" width="3.9" height="10.7" fill="#56b0c6"/><rect x="1422.4" y="157.2" width="5.2" height="10.7" fill="#4aa8c0"/><rect x="1438.4" y="157.3" width="5.5" height="10.7" fill="#4aa8c0"/><rect x="1447" y="157.4" width="8.7" height="10.7" fill="#4aa8c0"/><rect x="1456.9" y="157.4" width="3.4" height="10.7" fill="#2f8ca6"/><rect x="1465.1" y="157.5" width="9.3" height="10.7" fill="#2a86a0"/><rect x="1477" y="157.6" width="9.7" height="10.7" fill="#2f8ca6"/><rect x="1491.3" y="157.6" width="5.2" height="10.7" fill="#2a86a0"/><rect x="1501.1" y="157.7" width="7.2" height="10.7" fill="#2f8ca6"/><polygon points="1256,201.7 1518,202.8 1516.5,215.5 1254.5,214.4" fill="#3f9db6" /><rect x="1306" y="202.9" width="3.5" height="10.7" fill="#2f8ca6"/><rect x="1323.3" y="203" width="4.9" height="10.7" fill="#2f8ca6"/><rect x="1331.2" y="203" width="9.9" height="10.7" fill="#4aa8c0"/><rect x="1364.4" y="203.1" width="5" height="10.7" fill="#2a86a0"/><rect x="1374" y="203.2" width="4.4" height="10.7" fill="#56b0c6"/><rect x="1380.6" y="203.2" width="5" height="10.7" fill="#3793ac"/><rect x="1386.9" y="203.2" width="4.8" height="10.7" fill="#56b0c6"/><rect x="1415.9" y="203.4" width="3.3" height="10.7" fill="#2a86a0"/><rect x="1420.4" y="203.4" width="7.2" height="10.7" fill="#3793ac"/><rect x="1429" y="203.4" width="6.6" height="10.7" fill="#56b0c6"/><rect x="1437.9" y="203.4" width="8.4" height="10.7" fill="#2f8ca6"/><rect x="1450.3" y="203.5" width="7.3" height="10.7" fill="#56b0c6"/><rect x="1460.4" y="203.5" width="3.3" height="10.7" fill="#2a86a0"/><rect x="1480.8" y="203.6" width="5.6" height="10.7" fill="#3793ac"/><rect x="1488.4" y="203.7" width="8.6" height="10.7" fill="#3793ac"/><rect x="1500" y="203.7" width="8.6" height="10.7" fill="#3793ac"/><polygon points="1252.5,246 1516,246.7 1514.5,260.1 1251,259.4" fill="#3f9db6" /><rect x="1255.5" y="247" width="5" height="11.4" fill="#2a86a0"/><rect x="1261.7" y="247" width="8.2" height="11.4" fill="#2a86a0"/><rect x="1282.4" y="247.1" width="5.8" height="11.4" fill="#2f8ca6"/><rect x="1290" y="247.1" width="3.8" height="11.4" fill="#2f8ca6"/><rect x="1299.2" y="247.1" width="6.2" height="11.4" fill="#56b0c6"/><rect x="1306.7" y="247.1" width="4" height="11.4" fill="#4aa8c0"/><rect x="1314.8" y="247.2" width="5.6" height="11.4" fill="#3793ac"/><rect x="1328.8" y="247.2" width="6.4" height="11.4" fill="#56b0c6"/><rect x="1340.4" y="247.2" width="3.3" height="11.4" fill="#4aa8c0"/><rect x="1385.9" y="247.3" width="4.3" height="11.4" fill="#56b0c6"/><rect x="1395.8" y="247.4" width="4.1" height="11.4" fill="#2a86a0"/><rect x="1402.2" y="247.4" width="8.1" height="11.4" fill="#56b0c6"/><rect x="1434.8" y="247.5" width="5.1" height="11.4" fill="#4aa8c0"/><rect x="1442.2" y="247.5" width="5.7" height="11.4" fill="#2a86a0"/><rect x="1467.1" y="247.5" width="4.3" height="11.4" fill="#4aa8c0"/><rect x="1472.7" y="247.6" width="5.5" height="11.4" fill="#2a86a0"/><rect x="1481.4" y="247.6" width="6.6" height="11.4" fill="#2f8ca6"/><polygon points="1247.6,291 1508.5,291.3 1507,304.6 1246.1,304.3" fill="#3f9db6" /><rect x="1250.6" y="292" width="8.1" height="11.3" fill="#2f8ca6"/><rect x="1282.5" y="292" width="5.3" height="11.3" fill="#3793ac"/><rect x="1300.2" y="292.1" width="7.1" height="11.3" fill="#3793ac"/><rect x="1310" y="292.1" width="3.3" height="11.3" fill="#56b0c6"/><rect x="1346.9" y="292.1" width="9.2" height="11.3" fill="#2f8ca6"/><rect x="1359.7" y="292.1" width="9" height="11.3" fill="#2a86a0"/><rect x="1374.7" y="292.1" width="7" height="11.3" fill="#2a86a0"/><rect x="1389" y="292.1" width="8.7" height="11.3" fill="#2a86a0"/><rect x="1425.1" y="292.2" width="6.6" height="11.3" fill="#2f8ca6"/><rect x="1433.8" y="292.2" width="7.6" height="11.3" fill="#2f8ca6"/><rect x="1445.2" y="292.2" width="5.1" height="11.3" fill="#3793ac"/><rect x="1452.5" y="292.2" width="7.1" height="11.3" fill="#3793ac"/><rect x="1462.4" y="292.2" width="8.8" height="11.3" fill="#56b0c6"/><rect x="1476.8" y="292.2" width="4.7" height="11.3" fill="#56b0c6"/><rect x="1482.9" y="292.2" width="4" height="11.3" fill="#2a86a0"/><polygon points="1244,334 1501,334 1499.5,347 1242.5,347" fill="#3f9db6" /><rect x="1247" y="335" width="4.7" height="11" fill="#2f8ca6"/><rect x="1255.4" y="335" width="5.8" height="11" fill="#56b0c6"/><rect x="1276.2" y="335" width="4" height="11" fill="#56b0c6"/><rect x="1314.1" y="335" width="8.9" height="11" fill="#4aa8c0"/><rect x="1327.3" y="335" width="4.2" height="11" fill="#2f8ca6"/><rect x="1370" y="335" width="4.5" height="11" fill="#3793ac"/><rect x="1386.2" y="335" width="5.3" height="11" fill="#4aa8c0"/><rect x="1393.7" y="335" width="9.4" height="11" fill="#3793ac"/><rect x="1408.3" y="335" width="7.9" height="11" fill="#2f8ca6"/><rect x="1444.5" y="335" width="9.8" height="11" fill="#2f8ca6"/><rect x="1484.7" y="335" width="9.1" height="11" fill="#4aa8c0"/><polygon points="1240.4,376 1494,376 1492.5,389 1238.9,389" fill="#3f9db6" /><rect x="1255.8" y="377" width="5" height="11" fill="#2f8ca6"/><rect x="1265.8" y="377" width="7.5" height="11" fill="#2a86a0"/><rect x="1300.7" y="377" width="5.9" height="11" fill="#4aa8c0"/><rect x="1308" y="377" width="6.3" height="11" fill="#2f8ca6"/><rect x="1327.9" y="377" width="6.1" height="11" fill="#3793ac"/><rect x="1338.7" y="377" width="9.8" height="11" fill="#2f8ca6"/><rect x="1361.9" y="377" width="9.7" height="11" fill="#3793ac"/><rect x="1384.5" y="377" width="4.2" height="11" fill="#2f8ca6"/><rect x="1414.8" y="377" width="6" height="11" fill="#2f8ca6"/><rect x="1423.3" y="377" width="6" height="11" fill="#3793ac"/><rect x="1461.4" y="377" width="6.9" height="11" fill="#2a86a0"/><rect x="1471.5" y="377" width="8.4" height="11" fill="#3793ac"/><rect x="1482.6" y="377" width="7.5" height="11" fill="#56b0c6"/></g><polygon points="800.5,306.3 1147,270.3 1147,274 801,310" fill="#8c8c3e" /><rect x="974.3" y="335.4" width="82.10000000000014" height="11.600000000000023" fill="#7ab2d0" stroke="#98c4da" stroke-width="0.8"/><path d="M994.8 335.4L994.8 347" stroke="#8fc0d8" stroke-width="0.8" /><path d="M1015.4 335.4L1015.4 347" stroke="#8fc0d8" stroke-width="0.8" /><path d="M1035.9 335.4L1035.9 347" stroke="#8fc0d8" stroke-width="0.8" /><rect x="983" y="402.5" width="61.700000000000045" height="22.899999999999977" fill="#7ab2d0" stroke="#98c4da" stroke-width="0.8"/><path d="M998.4 402.5L998.4 425.4" stroke="#8fc0d8" stroke-width="0.8" /><path d="M1013.9 402.5L1013.9 425.4" stroke="#8fc0d8" stroke-width="0.8" /><path d="M1029.3 402.5L1029.3 425.4" stroke="#8fc0d8" stroke-width="0.8" /><rect x="1067.5" y="402.5" width="62.5" height="22.899999999999977" fill="#7ab2d0" stroke="#98c4da" stroke-width="0.8"/><path d="M1083.1 402.5L1083.1 425.4" stroke="#8fc0d8" stroke-width="0.8" /><path d="M1098.8 402.5L1098.8 425.4" stroke="#8fc0d8" stroke-width="0.8" /><path d="M1114.4 402.5L1114.4 425.4" stroke="#8fc0d8" stroke-width="0.8" /><linearGradient id="gd" x1="0" y1="0" x2="1" y2="0"><stop offset="0" stop-color="#7a7a7a"/><stop offset="0.48" stop-color="#6a6a6a"/><stop offset="0.5" stop-color="#747474"/><stop offset="1" stop-color="#626262"/></linearGradient><rect x="899.4" y="462" width="50.10000000000002" height="45.60000000000002" fill="url(#gd)" stroke="#8e8e8e" stroke-width="1"/><rect x="1066.5" y="463.8" width="51.09999999999991" height="46.19999999999999" fill="url(#gd)" stroke="#8e8e8e" stroke-width="1"/><polygon points="1322.8,441 1392.2,441.5 1388,493 1317,492" fill="url(#gd)" stroke="#8a8a8a" stroke-width="0.8"/><polygon points="792.5,510.5 806.5,493.5 808,507 1137,510.5 1137,513 1015,511" fill="#7e7e7e" /><polygon points="1137,505 1518,509.5 1518,517.5 1137,512.5" fill="#b2b2b2" /><path d="M1226.2 433.7L1264.3 454.9L1396 473M1415 476L1477 483.5" stroke="#111" stroke-width="1.2" fill="none"/><polygon points="1015,553 1020.5,553 1019.5,566 1014,566" fill="#b8b8b8" /><polygon points="1032,553 1037.5,553 1036.5,566 1031,566" fill="#b8b8b8" /><rect x="1013" y="547" width="26" height="7" fill="#008c8c"/><polygon points="1029,565 1034.5,565 1033.5,578 1028,578" fill="#b8b8b8" /><polygon points="1046,565 1051.5,565 1050.5,578 1045,578" fill="#b8b8b8" /><rect x="1027" y="559" width="26" height="7" fill="#008c8c"/><polygon points="1083,556 1088.5,556 1087.5,569 1082,569" fill="#b8b8b8" /><polygon points="1100,556 1105.5,556 1104.5,569 1099,569" fill="#b8b8b8" /><rect x="1081" y="550" width="26" height="7" fill="#008c8c"/><polygon points="1096,567 1101.5,567 1100.5,580 1095,580" fill="#b8b8b8" /><polygon points="1113,567 1118.5,567 1117.5,580 1112,580" fill="#b8b8b8" /><rect x="1094" y="561" width="26" height="7" fill="#008c8c"/><polygon points="1152,557 1157.5,557 1156.5,570 1151,570" fill="#b8b8b8" /><polygon points="1169,557 1174.5,557 1173.5,570 1168,570" fill="#b8b8b8" /><rect x="1150" y="551" width="26" height="7" fill="#008c8c"/><polygon points="1166,568 1171.5,568 1170.5,581 1165,581" fill="#b8b8b8" /><polygon points="1183,568 1188.5,568 1187.5,581 1182,581" fill="#b8b8b8" /><rect x="1164" y="562" width="26" height="7" fill="#008c8c"/><polygon points="1305,561 1310.5,561 1309.5,574 1304,574" fill="#b8b8b8" /><polygon points="1322,561 1327.5,561 1326.5,574 1321,574" fill="#b8b8b8" /><rect x="1303" y="555" width="26" height="7" fill="#008c8c"/><polygon points="1319,572 1324.5,572 1323.5,585 1318,585" fill="#b8b8b8" /><polygon points="1336,572 1341.5,572 1340.5,585 1335,585" fill="#b8b8b8" /><rect x="1317" y="566" width="26" height="7" fill="#008c8c"/><polygon points="1389,561 1394.5,561 1393.5,574 1388,574" fill="#b8b8b8" /><polygon points="1406,561 1411.5,561 1410.5,574 1405,574" fill="#b8b8b8" /><rect x="1387" y="555" width="26" height="7" fill="#008c8c"/><polygon points="1405,573 1410.5,573 1409.5,586 1404,586" fill="#b8b8b8" /><polygon points="1422,573 1427.5,573 1426.5,586 1421,586" fill="#b8b8b8" /><rect x="1403" y="567" width="26" height="7" fill="#008c8c"/><polygon points="1501,563 1506.5,563 1505.5,576 1500,576" fill="#b8b8b8" /><polygon points="1518,563 1523.5,563 1522.5,576 1517,576" fill="#b8b8b8" /><rect x="1499" y="557" width="26" height="7" fill="#008c8c"/><polygon points="1030.8,505 1035.2,505 1032.2,566 1027.8,566" fill="#008c8c" /><polygon points="1043.8,505 1048.2,505 1045.2,566 1040.8,566" fill="#008c8c" /><polygon points="1095.8,505 1100.2,505 1100.2,566 1095.8,566" fill="#008c8c" /><polygon points="1107.8,505 1112.2,505 1112.2,566 1107.8,566" fill="#008c8c" /><polygon points="1163.8,505 1168.2,505 1168.2,566 1163.8,566" fill="#008c8c" /><polygon points="1175.8,505 1180.2,505 1180.2,566 1175.8,566" fill="#008c8c" /><polygon points="1315.8,505 1320.2,505 1320.2,566 1315.8,566" fill="#008c8c" /><polygon points="1327.8,505 1332.2,505 1332.2,566 1327.8,566" fill="#008c8c" /><polygon points="1401.8,505 1406.2,505 1400.2,566 1395.8,566" fill="#008c8c" /><polygon points="1417.8,505 1422.2,505 1414.2,566 1409.8,566" fill="#008c8c" /><polygon points="1016,504 1426,504 1426,509.5 1016,509.5" fill="#008c8c" /><polygon points="1020,514.5 1426,515 1426,520.5 1020,520" fill="#008c8c" /><polygon points="1026,532 1426,534 1426,541.5 1026,539.5" fill="#008888" /><polygon points="1024,523 1426,524.5 1426,527.5 1024,526" fill="#0a7878" /><polygon points="1034,505 1038,505 1038,534 1034,534" fill="#008c8c" /><polygon points="1068,505 1072,505 1072,534 1068,534" fill="#008c8c" /><polygon points="1102,505 1106,505 1106,534 1102,534" fill="#008c8c" /><polygon points="1136,505 1140,505 1140,534 1136,534" fill="#008c8c" /><polygon points="1170,505 1174,505 1174,534 1170,534" fill="#008c8c" /><polygon points="1204,505 1208,505 1208,534 1204,534" fill="#008c8c" /><polygon points="1238,505 1242,505 1242,534 1238,534" fill="#008c8c" /><polygon points="1272,505 1276,505 1276,534 1272,534" fill="#008c8c" /><polygon points="1306,505 1310,505 1310,534 1306,534" fill="#008c8c" /><polygon points="1340,505 1344,505 1344,534 1340,534" fill="#008c8c" /><polygon points="1374,505 1378,505 1378,534 1374,534" fill="#008c8c" /><polygon points="1408,505 1412,505 1412,534 1408,534" fill="#008c8c" /><path d="M1050 521L1072 533" stroke="#0a7878" stroke-width="2.6" /><path d="M1072 533L1094 521" stroke="#0a7878" stroke-width="2.6" /><path d="M1112 521L1137 533" stroke="#0a7878" stroke-width="2.6" /><path d="M1137 533L1162 521" stroke="#0a7878" stroke-width="2.6" /><path d="M1182 521L1216 533" stroke="#0a7878" stroke-width="2.6" /><path d="M1216 533L1250 521" stroke="#0a7878" stroke-width="2.6" /><path d="M1256 521L1286 533" stroke="#0a7878" stroke-width="2.6" /><path d="M1286 533L1316 521" stroke="#0a7878" stroke-width="2.6" /><path d="M1336 521L1368 533" stroke="#0a7878" stroke-width="2.6" /><path d="M1368 533L1400 521" stroke="#0a7878" stroke-width="2.6" /><path d="M1026 538L1044 566" stroke="#008c8c" stroke-width="2.4" /><path d="M1044 538L1026 566" stroke="#008c8c" stroke-width="2.4" /><path d="M1092 538L1110 566" stroke="#008c8c" stroke-width="2.4" /><path d="M1110 538L1092 566" stroke="#008c8c" stroke-width="2.4" /><path d="M1160 538L1178 566" stroke="#008c8c" stroke-width="2.4" /><path d="M1178 538L1160 566" stroke="#008c8c" stroke-width="2.4" /><path d="M1312 538L1330 566" stroke="#008c8c" stroke-width="2.4" /><path d="M1330 538L1312 566" stroke="#008c8c" stroke-width="2.4" /><path d="M1396 538L1414 566" stroke="#008c8c" stroke-width="2.4" /><path d="M1414 538L1396 566" stroke="#008c8c" stroke-width="2.4" /><polygon points="1012,459 1056,459 1056,463 1012,463" fill="#008c8c" /><polygon points="1015,469 1060,469 1060,473 1015,473" fill="#008c8c" /><polygon points="1022,480 1066,480 1066,484 1022,484" fill="#008c8c" /><polygon points="1019,459 1023.5,459 1032.5,545 1028,545" fill="#008c8c" /><polygon points="1032,459 1036.5,459 1048.5,545 1044,545" fill="#008c8c" /><polygon points="1050,459 1054.5,459 1060.5,545 1056,545" fill="#008c8c" /><polygon points="1017,520 1023,520 1022,534 1017,534" fill="#b0b0b0" /><polygon points="1412,459 1518,459 1518,464 1412,464" fill="#008c8c" /><polygon points="1412,470 1518,470 1518,474.5 1412,474.5" fill="#008c8c" /><polygon points="1408,482 1518,483 1518,489 1408,488" fill="#008888" /><polygon points="1400,494 1518,496 1518,501 1400,499" fill="#008c8c" /><polygon points="1422,459 1426,459 1425,500 1421,500" fill="#008c8c" /><polygon points="1446,459 1450,459 1449,500 1445,500" fill="#008c8c" /><polygon points="1470,459 1474,459 1473,500 1469,500" fill="#008c8c" /><polygon points="1494,459 1498,459 1497,500 1493,500" fill="#008c8c" /><polygon points="1514,459 1518,459 1517,500 1513,500" fill="#008c8c" /><path d="M1412 463L1400 540" stroke="#008c8c" stroke-width="5" /><path d="M1426 463L1414 566" stroke="#008c8c" stroke-width="5" /><path d="M1400 540L1424 500" stroke="#0a7878" stroke-width="3" /><path d="M1518 380L1500 420" stroke="#008c8c" stroke-width="3" /><path d="M1512 405L1518 440" stroke="#008c8c" stroke-width="3" /><path d="M1504 418L1490 470" stroke="#008c8c" stroke-width="3" /><path d="M1518 330L1508 372" stroke="#008c8c" stroke-width="3" /><path d="M1500 420L1518 432" stroke="#008c8c" stroke-width="3" /><path d="M1496 440L1518 448" stroke="#008c8c" stroke-width="3" /><path d="M1036 446L1060 487Q1063 493.5 1072 493.5L1388 493.5Q1399.5 493.5 1400.5 482L1402 462Q1403 449.5 1414 449.5L1518 449.5" stroke="#b48c00" stroke-width="7.5" fill="none" stroke-linejoin="round"/><path d="M1036 446L1060 487Q1063 493.5 1072 493.5L1388 493.5Q1399.5 493.5 1400.5 482L1402 462Q1403 449.5 1414 449.5L1518 449.5" stroke="#e6b800" stroke-width="6" fill="none" stroke-linejoin="round"/><path d="M1036 446L1060 487Q1063 493.5 1072 493.5L1388 493.5Q1399.5 493.5 1400.5 482L1402 462Q1403 449.5 1414 449.5L1518 449.5" stroke="#f4cc18" stroke-width="2.1" fill="none" stroke-linejoin="round" transform="translate(0,-1)"/><path d="M1024 446L1050 490Q1055 499.5 1066 499.5L1394 499.5Q1408 499.5 1409.5 486L1411 468Q1412 456 1422 456L1518 456" stroke="#b48c00" stroke-width="7.5" fill="none" stroke-linejoin="round"/><path d="M1024 446L1050 490Q1055 499.5 1066 499.5L1394 499.5Q1408 499.5 1409.5 486L1411 468Q1412 456 1422 456L1518 456" stroke="#e6b800" stroke-width="6" fill="none" stroke-linejoin="round"/><path d="M1024 446L1050 490Q1055 499.5 1066 499.5L1394 499.5Q1408 499.5 1409.5 486L1411 468Q1412 456 1422 456L1518 456" stroke="#f4cc18" stroke-width="2.1" fill="none" stroke-linejoin="round" transform="translate(0,-1)"/><path d="M1074 489l3 3l-2 3l3 3l-2 4" stroke="#ffe838" stroke-width="1.6" fill="none"/><path d="M1078 490l3 3l-2 3l3 3" stroke="#ffe838" stroke-width="1.4" fill="none"/><path d="M1110 489l3 3l-2 3l3 3l-2 4" stroke="#ffe838" stroke-width="1.6" fill="none"/><path d="M1114 490l3 3l-2 3l3 3" stroke="#ffe838" stroke-width="1.4" fill="none"/><path d="M1146 489l3 3l-2 3l3 3l-2 4" stroke="#ffe838" stroke-width="1.6" fill="none"/><path d="M1150 490l3 3l-2 3l3 3" stroke="#ffe838" stroke-width="1.4" fill="none"/><path d="M1200 489l3 3l-2 3l3 3l-2 4" stroke="#ffe838" stroke-width="1.6" fill="none"/><path d="M1204 490l3 3l-2 3l3 3" stroke="#ffe838" stroke-width="1.4" fill="none"/><path d="M1254 489l3 3l-2 3l3 3l-2 4" stroke="#ffe838" stroke-width="1.6" fill="none"/><path d="M1258 490l3 3l-2 3l3 3" stroke="#ffe838" stroke-width="1.4" fill="none"/><path d="M1428 445l3 3l-2 3l3 3l-2 4" stroke="#ffe838" stroke-width="1.6" fill="none"/><path d="M1432 446l3 3l-2 3l3 3" stroke="#ffe838" stroke-width="1.4" fill="none"/><path d="M1462 445l3 3l-2 3l3 3l-2 4" stroke="#ffe838" stroke-width="1.6" fill="none"/><path d="M1466 446l3 3l-2 3l3 3" stroke="#ffe838" stroke-width="1.4" fill="none"/><path d="M1500 445l3 3l-2 3l3 3l-2 4" stroke="#ffe838" stroke-width="1.6" fill="none"/><path d="M1504 446l3 3l-2 3l3 3" stroke="#ffe838" stroke-width="1.4" fill="none"/><path d="M568 581.9L570.6 573.9L573.2 581.9M570.6 568.9v4" stroke="#0a0af0" stroke-width="1" fill="none"/><circle cx="570.6" cy="571.9" r="1.9" fill="none" stroke="#0a0af0" stroke-width="0.9"/><path d="M573.2 582L575.8 574L578.4 582M575.8 569v4" stroke="#0a0af0" stroke-width="1" fill="none"/><circle cx="575.8" cy="572" r="1.9" fill="none" stroke="#0a0af0" stroke-width="0.9"/><path d="M578.4 582L581 574L583.6 582M581 569v4" stroke="#0a0af0" stroke-width="1" fill="none"/><circle cx="581" cy="572" r="1.9" fill="none" stroke="#0a0af0" stroke-width="0.9"/><path d="M583.6 582.1L586.2 574.1L588.8 582.1M586.2 569.1v4" stroke="#0a0af0" stroke-width="1" fill="none"/><circle cx="586.2" cy="572.1" r="1.9" fill="none" stroke="#0a0af0" stroke-width="0.9"/><path d="M588.8 582.2L591.4 574.2L594 582.2M591.4 569.2v4" stroke="#0a0af0" stroke-width="1" fill="none"/><circle cx="591.4" cy="572.2" r="1.9" fill="none" stroke="#0a0af0" stroke-width="0.9"/><path d="M594 582.2L596.6 574.3L599.2 582.2M596.6 569.3v4" stroke="#0a0af0" stroke-width="1" fill="none"/><circle cx="596.6" cy="572.3" r="1.9" fill="none" stroke="#0a0af0" stroke-width="0.9"/><path d="M599.2 582.3L601.8 574.3L604.4 582.3M601.8 569.3v4" stroke="#0a0af0" stroke-width="1" fill="none"/><circle cx="601.8" cy="572.3" r="1.9" fill="none" stroke="#0a0af0" stroke-width="0.9"/><path d="M604.4 582.3L607 574.4L609.6 582.3M607 569.4v4" stroke="#0a0af0" stroke-width="1" fill="none"/><circle cx="607" cy="572.4" r="1.9" fill="none" stroke="#0a0af0" stroke-width="0.9"/><path d="M609.6 582.4L612.2 574.5L614.8 582.4M612.2 569.5v4" stroke="#0a0af0" stroke-width="1" fill="none"/><circle cx="612.2" cy="572.5" r="1.9" fill="none" stroke="#0a0af0" stroke-width="0.9"/><path d="M614.8 582.4L617.4 574.5L620 582.4M617.4 569.5v4" stroke="#0a0af0" stroke-width="1" fill="none"/><circle cx="617.4" cy="572.5" r="1.9" fill="none" stroke="#0a0af0" stroke-width="0.9"/><path d="M620 582.5L622.6 574.6L625.2 582.5M622.6 569.6v4" stroke="#0a0af0" stroke-width="1" fill="none"/><circle cx="622.6" cy="572.6" r="1.9" fill="none" stroke="#0a0af0" stroke-width="0.9"/><path d="M625.2 582.6L627.8 574.7L630.4 582.6M627.8 569.7v4" stroke="#0a0af0" stroke-width="1" fill="none"/><circle cx="627.8" cy="572.7" r="1.9" fill="none" stroke="#0a0af0" stroke-width="0.9"/><path d="M630.4 582.6L633 574.8L635.6 582.6M633 569.8v4" stroke="#0a0af0" stroke-width="1" fill="none"/><circle cx="633" cy="572.8" r="1.9" fill="none" stroke="#0a0af0" stroke-width="0.9"/><path d="M635.6 582.7L638.2 574.8L640.8 582.7M638.2 569.8v4" stroke="#0a0af0" stroke-width="1" fill="none"/><circle cx="638.2" cy="572.8" r="1.9" fill="none" stroke="#0a0af0" stroke-width="0.9"/><path d="M640.8 582.7L643.4 574.9L646 582.7M643.4 569.9v4" stroke="#0a0af0" stroke-width="1" fill="none"/><circle cx="643.4" cy="572.9" r="1.9" fill="none" stroke="#0a0af0" stroke-width="0.9"/><path d="M646 582.8L648.6 575L651.2 582.8M648.6 570v4" stroke="#0a0af0" stroke-width="1" fill="none"/><circle cx="648.6" cy="573" r="1.9" fill="none" stroke="#0a0af0" stroke-width="0.9"/><path d="M651.2 582.8L653.8 575.1L656.4 582.8M653.8 570.1v4" stroke="#0a0af0" stroke-width="1" fill="none"/><circle cx="653.8" cy="573.1" r="1.9" fill="none" stroke="#0a0af0" stroke-width="0.9"/><path d="M656.4 582.9L659 575.1L661.6 582.9M659 570.1v4" stroke="#0a0af0" stroke-width="1" fill="none"/><circle cx="659" cy="573.1" r="1.9" fill="none" stroke="#0a0af0" stroke-width="0.9"/><path d="M661.6 583L664.2 575.2L666.8 583M664.2 570.2v4" stroke="#0a0af0" stroke-width="1" fill="none"/><circle cx="664.2" cy="573.2" r="1.9" fill="none" stroke="#0a0af0" stroke-width="0.9"/><path d="M666.8 583L669.4 575.3L672 583M669.4 570.3v4" stroke="#0a0af0" stroke-width="1" fill="none"/><circle cx="669.4" cy="573.3" r="1.9" fill="none" stroke="#0a0af0" stroke-width="0.9"/><path d="M672 583.1L674.6 575.3L677.2 583.1M674.6 570.3v4" stroke="#0a0af0" stroke-width="1" fill="none"/><circle cx="674.6" cy="573.3" r="1.9" fill="none" stroke="#0a0af0" stroke-width="0.9"/><path d="M677.2 583.1L679.8 575.4L682.4 583.1M679.8 570.4v4" stroke="#0a0af0" stroke-width="1" fill="none"/><circle cx="679.8" cy="573.4" r="1.9" fill="none" stroke="#0a0af0" stroke-width="0.9"/><path d="M682.4 583.2L685 575.5L687.6 583.2M685 570.5v4" stroke="#0a0af0" stroke-width="1" fill="none"/><circle cx="685" cy="573.5" r="1.9" fill="none" stroke="#0a0af0" stroke-width="0.9"/><path d="M687.6 583.3L690.2 575.6L692.8 583.3M690.2 570.6v4" stroke="#0a0af0" stroke-width="1" fill="none"/><circle cx="690.2" cy="573.6" r="1.9" fill="none" stroke="#0a0af0" stroke-width="0.9"/><path d="M692.8 583.3L695.4 575.6L698 583.3M695.4 570.6v4" stroke="#0a0af0" stroke-width="1" fill="none"/><circle cx="695.4" cy="573.6" r="1.9" fill="none" stroke="#0a0af0" stroke-width="0.9"/><path d="M698 583.4L700.6 575.7L703.2 583.4M700.6 570.7v4" stroke="#0a0af0" stroke-width="1" fill="none"/><circle cx="700.6" cy="573.7" r="1.9" fill="none" stroke="#0a0af0" stroke-width="0.9"/><path d="M703.2 583.4L705.8 575.8L708.4 583.4M705.8 570.8v4" stroke="#0a0af0" stroke-width="1" fill="none"/><circle cx="705.8" cy="573.8" r="1.9" fill="none" stroke="#0a0af0" stroke-width="0.9"/><path d="M708.4 583.5L711 575.8L713.6 583.5M711 570.8v4" stroke="#0a0af0" stroke-width="1" fill="none"/><circle cx="711" cy="573.8" r="1.9" fill="none" stroke="#0a0af0" stroke-width="0.9"/><path d="M713.6 583.5L716.2 575.9L718.8 583.5M716.2 570.9v4" stroke="#0a0af0" stroke-width="1" fill="none"/><circle cx="716.2" cy="573.9" r="1.9" fill="none" stroke="#0a0af0" stroke-width="0.9"/><path d="M718.8 583.6L721.4 576L724 583.6M721.4 571v4" stroke="#0a0af0" stroke-width="1" fill="none"/><circle cx="721.4" cy="574" r="1.9" fill="none" stroke="#0a0af0" stroke-width="0.9"/><path d="M724 583.7L726.6 576.1L729.2 583.7M726.6 571.1v4" stroke="#0a0af0" stroke-width="1" fill="none"/><circle cx="726.6" cy="574.1" r="1.9" fill="none" stroke="#0a0af0" stroke-width="0.9"/><path d="M729.2 583.7L731.8 576.1L734.4 583.7M731.8 571.1v4" stroke="#0a0af0" stroke-width="1" fill="none"/><circle cx="731.8" cy="574.1" r="1.9" fill="none" stroke="#0a0af0" stroke-width="0.9"/><path d="M734.4 583.8L737 576.2L739.6 583.8M737 571.2v4" stroke="#0a0af0" stroke-width="1" fill="none"/><circle cx="737" cy="574.2" r="1.9" fill="none" stroke="#0a0af0" stroke-width="0.9"/><path d="M739.6 583.8L742.2 576.3L744.8 583.8M742.2 571.3v4" stroke="#0a0af0" stroke-width="1" fill="none"/><circle cx="742.2" cy="574.3" r="1.9" fill="none" stroke="#0a0af0" stroke-width="0.9"/><path d="M744.8 583.9L747.4 576.3L750 583.9M747.4 571.3v4" stroke="#0a0af0" stroke-width="1" fill="none"/><circle cx="747.4" cy="574.3" r="1.9" fill="none" stroke="#0a0af0" stroke-width="0.9"/><path d="M750 583.9L752.6 576.4L755.2 583.9M752.6 571.4v4" stroke="#0a0af0" stroke-width="1" fill="none"/><circle cx="752.6" cy="574.4" r="1.9" fill="none" stroke="#0a0af0" stroke-width="0.9"/><path d="M755.2 584L757.8 576.5L760.4 584M757.8 571.5v4" stroke="#0a0af0" stroke-width="1" fill="none"/><circle cx="757.8" cy="574.5" r="1.9" fill="none" stroke="#0a0af0" stroke-width="0.9"/><path d="M760.4 584.1L763 576.6L765.6 584.1M763 571.6v4" stroke="#0a0af0" stroke-width="1" fill="none"/><circle cx="763" cy="574.6" r="1.9" fill="none" stroke="#0a0af0" stroke-width="0.9"/><path d="M765.6 584.1L768.2 576.6L770.8 584.1M768.2 571.6v4" stroke="#0a0af0" stroke-width="1" fill="none"/><circle cx="768.2" cy="574.6" r="1.9" fill="none" stroke="#0a0af0" stroke-width="0.9"/><path d="M770.8 584.2L773.4 576.7L776 584.2M773.4 571.7v4" stroke="#0a0af0" stroke-width="1" fill="none"/><circle cx="773.4" cy="574.7" r="1.9" fill="none" stroke="#0a0af0" stroke-width="0.9"/><path d="M776 584.2L778.6 576.8L781.2 584.2M778.6 571.8v4" stroke="#0a0af0" stroke-width="1" fill="none"/><circle cx="778.6" cy="574.8" r="1.9" fill="none" stroke="#0a0af0" stroke-width="0.9"/><path d="M781.2 584.3L783.8 576.8L786.4 584.3M783.8 571.8v4" stroke="#0a0af0" stroke-width="1" fill="none"/><circle cx="783.8" cy="574.8" r="1.9" fill="none" stroke="#0a0af0" stroke-width="0.9"/><path d="M786.4 584.4L789 576.9L791.6 584.4M789 571.9v4" stroke="#0a0af0" stroke-width="1" fill="none"/><circle cx="789" cy="574.9" r="1.9" fill="none" stroke="#0a0af0" stroke-width="0.9"/><path d="M791.6 584.4L794.2 577L796.8 584.4M794.2 572v4" stroke="#0a0af0" stroke-width="1" fill="none"/><circle cx="794.2" cy="575" r="1.9" fill="none" stroke="#0a0af0" stroke-width="0.9"/><path d="M796.8 584.5L799.4 577.1L802 584.5M799.4 572.1v4" stroke="#0a0af0" stroke-width="1" fill="none"/><circle cx="799.4" cy="575.1" r="1.9" fill="none" stroke="#0a0af0" stroke-width="0.9"/><path d="M802 584.5L804.6 577.1L807.2 584.5M804.6 572.1v4" stroke="#0a0af0" stroke-width="1" fill="none"/><circle cx="804.6" cy="575.1" r="1.9" fill="none" stroke="#0a0af0" stroke-width="0.9"/><path d="M807.2 584.6L809.8 577.2L812.4 584.6M809.8 572.2v4" stroke="#0a0af0" stroke-width="1" fill="none"/><circle cx="809.8" cy="575.2" r="1.9" fill="none" stroke="#0a0af0" stroke-width="0.9"/><path d="M812.4 584.6L815 577.3L817.6 584.6M815 572.3v4" stroke="#0a0af0" stroke-width="1" fill="none"/><circle cx="815" cy="575.3" r="1.9" fill="none" stroke="#0a0af0" stroke-width="0.9"/><path d="M817.6 584.7L820.2 577.3L822.8 584.7M820.2 572.3v4" stroke="#0a0af0" stroke-width="1" fill="none"/><circle cx="820.2" cy="575.3" r="1.9" fill="none" stroke="#0a0af0" stroke-width="0.9"/><path d="M822.8 584.8L825.4 577.4L828 584.8M825.4 572.4v4" stroke="#0a0af0" stroke-width="1" fill="none"/><circle cx="825.4" cy="575.4" r="1.9" fill="none" stroke="#0a0af0" stroke-width="0.9"/><path d="M828 584.8L830.6 577.5L833.2 584.8M830.6 572.5v4" stroke="#0a0af0" stroke-width="1" fill="none"/><circle cx="830.6" cy="575.5" r="1.9" fill="none" stroke="#0a0af0" stroke-width="0.9"/><path d="M833.2 584.9L835.8 577.6L838.4 584.9M835.8 572.6v4" stroke="#0a0af0" stroke-width="1" fill="none"/><circle cx="835.8" cy="575.6" r="1.9" fill="none" stroke="#0a0af0" stroke-width="0.9"/><path d="M838.4 584.9L841 577.6L843.6 584.9M841 572.6v4" stroke="#0a0af0" stroke-width="1" fill="none"/><circle cx="841" cy="575.6" r="1.9" fill="none" stroke="#0a0af0" stroke-width="0.9"/><path d="M843.6 585L846.2 577.7L848.8 585M846.2 572.7v4" stroke="#0a0af0" stroke-width="1" fill="none"/><circle cx="846.2" cy="575.7" r="1.9" fill="none" stroke="#0a0af0" stroke-width="0.9"/><path d="M848.8 585L851.4 577.8L854 585M851.4 572.8v4" stroke="#0a0af0" stroke-width="1" fill="none"/><circle cx="851.4" cy="575.8" r="1.9" fill="none" stroke="#0a0af0" stroke-width="0.9"/><path d="M854 585.1L856.6 577.8L859.2 585.1M856.6 572.8v4" stroke="#0a0af0" stroke-width="1" fill="none"/><circle cx="856.6" cy="575.8" r="1.9" fill="none" stroke="#0a0af0" stroke-width="0.9"/><path d="M859.2 585.2L861.8 577.9L864.4 585.2M861.8 572.9v4" stroke="#0a0af0" stroke-width="1" fill="none"/><circle cx="861.8" cy="575.9" r="1.9" fill="none" stroke="#0a0af0" stroke-width="0.9"/><path d="M864.4 585.2L867 578L869.6 585.2M867 573v4" stroke="#0a0af0" stroke-width="1" fill="none"/><circle cx="867" cy="576" r="1.9" fill="none" stroke="#0a0af0" stroke-width="0.9"/><path d="M869.6 585.3L872.2 578.1L874.8 585.3M872.2 573.1v4" stroke="#0a0af0" stroke-width="1" fill="none"/><circle cx="872.2" cy="576.1" r="1.9" fill="none" stroke="#0a0af0" stroke-width="0.9"/><path d="M874.8 585.3L877.4 578.1L880 585.3M877.4 573.1v4" stroke="#0a0af0" stroke-width="1" fill="none"/><circle cx="877.4" cy="576.1" r="1.9" fill="none" stroke="#0a0af0" stroke-width="0.9"/><path d="M880 585.4L882.6 578.2L885.2 585.4M882.6 573.2v4" stroke="#0a0af0" stroke-width="1" fill="none"/><circle cx="882.6" cy="576.2" r="1.9" fill="none" stroke="#0a0af0" stroke-width="0.9"/><path d="M885.2 585.5L887.8 578.3L890.4 585.5M887.8 573.3v4" stroke="#0a0af0" stroke-width="1" fill="none"/><circle cx="887.8" cy="576.3" r="1.9" fill="none" stroke="#0a0af0" stroke-width="0.9"/><path d="M890.4 585.5L893 578.3L895.6 585.5M893 573.3v4" stroke="#0a0af0" stroke-width="1" fill="none"/><circle cx="893" cy="576.3" r="1.9" fill="none" stroke="#0a0af0" stroke-width="0.9"/><path d="M895.6 585.6L898.2 578.4L900.8 585.6M898.2 573.4v4" stroke="#0a0af0" stroke-width="1" fill="none"/><circle cx="898.2" cy="576.4" r="1.9" fill="none" stroke="#0a0af0" stroke-width="0.9"/><path d="M900.8 585.6L903.4 578.5L906 585.6M903.4 573.5v4" stroke="#0a0af0" stroke-width="1" fill="none"/><circle cx="903.4" cy="576.5" r="1.9" fill="none" stroke="#0a0af0" stroke-width="0.9"/><path d="M906 585.7L908.6 578.6L911.2 585.7M908.6 573.6v4" stroke="#0a0af0" stroke-width="1" fill="none"/><circle cx="908.6" cy="576.6" r="1.9" fill="none" stroke="#0a0af0" stroke-width="0.9"/><path d="M911.2 585.7L913.8 578.6L916.4 585.7M913.8 573.6v4" stroke="#0a0af0" stroke-width="1" fill="none"/><circle cx="913.8" cy="576.6" r="1.9" fill="none" stroke="#0a0af0" stroke-width="0.9"/><path d="M916.4 585.8L919 578.7L921.6 585.8M919 573.7v4" stroke="#0a0af0" stroke-width="1" fill="none"/><circle cx="919" cy="576.7" r="1.9" fill="none" stroke="#0a0af0" stroke-width="0.9"/><path d="M921.6 585.9L924.2 578.8L926.8 585.9M924.2 573.8v4" stroke="#0a0af0" stroke-width="1" fill="none"/><circle cx="924.2" cy="576.8" r="1.9" fill="none" stroke="#0a0af0" stroke-width="0.9"/><path d="M926.8 585.9L929.4 578.8L932 585.9M929.4 573.8v4" stroke="#0a0af0" stroke-width="1" fill="none"/><circle cx="929.4" cy="576.8" r="1.9" fill="none" stroke="#0a0af0" stroke-width="0.9"/><path d="M932 586L934.6 578.9L937.2 586M934.6 573.9v4" stroke="#0a0af0" stroke-width="1" fill="none"/><circle cx="934.6" cy="576.9" r="1.9" fill="none" stroke="#0a0af0" stroke-width="0.9"/><path d="M937.2 586L939.8 579L942.4 586M939.8 574v4" stroke="#0a0af0" stroke-width="1" fill="none"/><circle cx="939.8" cy="577" r="1.9" fill="none" stroke="#0a0af0" stroke-width="0.9"/><path d="M942.4 586.1L945 579.1L947.6 586.1M945 574.1v4" stroke="#0a0af0" stroke-width="1" fill="none"/><circle cx="945" cy="577.1" r="1.9" fill="none" stroke="#0a0af0" stroke-width="0.9"/><path d="M947.6 586.1L950.2 579.1L952.8 586.1M950.2 574.1v4" stroke="#0a0af0" stroke-width="1" fill="none"/><circle cx="950.2" cy="577.1" r="1.9" fill="none" stroke="#0a0af0" stroke-width="0.9"/><path d="M952.8 586.2L955.4 579.2L958 586.2M955.4 574.2v4" stroke="#0a0af0" stroke-width="1" fill="none"/><circle cx="955.4" cy="577.2" r="1.9" fill="none" stroke="#0a0af0" stroke-width="0.9"/><path d="M958 586.3L960.6 579.3L963.2 586.3M960.6 574.3v4" stroke="#0a0af0" stroke-width="1" fill="none"/><circle cx="960.6" cy="577.3" r="1.9" fill="none" stroke="#0a0af0" stroke-width="0.9"/><path d="M963.2 586.3L965.8 579.4L968.4 586.3M965.8 574.4v4" stroke="#0a0af0" stroke-width="1" fill="none"/><circle cx="965.8" cy="577.4" r="1.9" fill="none" stroke="#0a0af0" stroke-width="0.9"/><path d="M968.4 586.4L971 579.4L973.6 586.4M971 574.4v4" stroke="#0a0af0" stroke-width="1" fill="none"/><circle cx="971" cy="577.4" r="1.9" fill="none" stroke="#0a0af0" stroke-width="0.9"/><path d="M973.6 586.4L976.2 579.5L978.8 586.4M976.2 574.5v4" stroke="#0a0af0" stroke-width="1" fill="none"/><circle cx="976.2" cy="577.5" r="1.9" fill="none" stroke="#0a0af0" stroke-width="0.9"/><path d="M978.8 586.5L981.4 579.6L984 586.5M981.4 574.6v4" stroke="#0a0af0" stroke-width="1" fill="none"/><circle cx="981.4" cy="577.6" r="1.9" fill="none" stroke="#0a0af0" stroke-width="0.9"/><path d="M984 586.6L986.6 579.6L989.2 586.6M986.6 574.6v4" stroke="#0a0af0" stroke-width="1" fill="none"/><circle cx="986.6" cy="577.6" r="1.9" fill="none" stroke="#0a0af0" stroke-width="0.9"/><path d="M989.2 586.6L991.8 579.7L994.4 586.6M991.8 574.7v4" stroke="#0a0af0" stroke-width="1" fill="none"/><circle cx="991.8" cy="577.7" r="1.9" fill="none" stroke="#0a0af0" stroke-width="0.9"/><path d="M994.4 586.7L997 579.8L999.6 586.7M997 574.8v4" stroke="#0a0af0" stroke-width="1" fill="none"/><circle cx="997" cy="577.8" r="1.9" fill="none" stroke="#0a0af0" stroke-width="0.9"/><path d="M999.6 586.7L1002.2 579.9L1004.8 586.7M1002.2 574.9v4" stroke="#0a0af0" stroke-width="1" fill="none"/><circle cx="1002.2" cy="577.9" r="1.9" fill="none" stroke="#0a0af0" stroke-width="0.9"/><path d="M1004.8 586.8L1007.4 579.9L1010 586.8M1007.4 574.9v4" stroke="#0a0af0" stroke-width="1" fill="none"/><circle cx="1007.4" cy="577.9" r="1.9" fill="none" stroke="#0a0af0" stroke-width="0.9"/><path d="M1010 586.8L1012.6 580L1015.2 586.8M1012.6 575v4" stroke="#0a0af0" stroke-width="1" fill="none"/><circle cx="1012.6" cy="578" r="1.9" fill="none" stroke="#0a0af0" stroke-width="0.9"/><path d="M1015.2 586.9L1017.8 580.1L1020.4 586.9M1017.8 575.1v4" stroke="#0a0af0" stroke-width="1" fill="none"/><circle cx="1017.8" cy="578.1" r="1.9" fill="none" stroke="#0a0af0" stroke-width="0.9"/><path d="M1020.4 587L1023 580.1L1025.6 587M1023 575.1v4" stroke="#0a0af0" stroke-width="1" fill="none"/><circle cx="1023" cy="578.1" r="1.9" fill="none" stroke="#0a0af0" stroke-width="0.9"/><path d="M1025.6 587L1028.2 580.2L1030.8 587M1028.2 575.2v4" stroke="#0a0af0" stroke-width="1" fill="none"/><circle cx="1028.2" cy="578.2" r="1.9" fill="none" stroke="#0a0af0" stroke-width="0.9"/><path d="M1030.8 587.1L1033.4 580.3L1036 587.1M1033.4 575.3v4" stroke="#0a0af0" stroke-width="1" fill="none"/><circle cx="1033.4" cy="578.3" r="1.9" fill="none" stroke="#0a0af0" stroke-width="0.9"/><path d="M1036 587.1L1038.6 580.4L1041.2 587.1M1038.6 575.4v4" stroke="#0a0af0" stroke-width="1" fill="none"/><circle cx="1038.6" cy="578.4" r="1.9" fill="none" stroke="#0a0af0" stroke-width="0.9"/><path d="M1041.2 587.2L1043.8 580.4L1046.4 587.2M1043.8 575.4v4" stroke="#0a0af0" stroke-width="1" fill="none"/><circle cx="1043.8" cy="578.4" r="1.9" fill="none" stroke="#0a0af0" stroke-width="0.9"/><path d="M1046.4 587.2L1049 580.5L1051.6 587.2M1049 575.5v4" stroke="#0a0af0" stroke-width="1" fill="none"/><circle cx="1049" cy="578.5" r="1.9" fill="none" stroke="#0a0af0" stroke-width="0.9"/><path d="M1051.6 587.3L1054.2 580.6L1056.8 587.3M1054.2 575.6v4" stroke="#0a0af0" stroke-width="1" fill="none"/><circle cx="1054.2" cy="578.6" r="1.9" fill="none" stroke="#0a0af0" stroke-width="0.9"/><path d="M1056.8 587.4L1059.4 580.6L1062 587.4M1059.4 575.6v4" stroke="#0a0af0" stroke-width="1" fill="none"/><circle cx="1059.4" cy="578.6" r="1.9" fill="none" stroke="#0a0af0" stroke-width="0.9"/><path d="M1062 587.4L1064.6 580.7L1067.2 587.4M1064.6 575.7v4" stroke="#0a0af0" stroke-width="1" fill="none"/><circle cx="1064.6" cy="578.7" r="1.9" fill="none" stroke="#0a0af0" stroke-width="0.9"/><path d="M1067.2 587.5L1069.8 580.8L1072.4 587.5M1069.8 575.8v4" stroke="#0a0af0" stroke-width="1" fill="none"/><circle cx="1069.8" cy="578.8" r="1.9" fill="none" stroke="#0a0af0" stroke-width="0.9"/><path d="M1072.4 587.5L1075 580.9L1077.6 587.5M1075 575.9v4" stroke="#0a0af0" stroke-width="1" fill="none"/><circle cx="1075" cy="578.9" r="1.9" fill="none" stroke="#0a0af0" stroke-width="0.9"/><path d="M1077.6 587.6L1080.2 580.9L1082.8 587.6M1080.2 575.9v4" stroke="#0a0af0" stroke-width="1" fill="none"/><circle cx="1080.2" cy="578.9" r="1.9" fill="none" stroke="#0a0af0" stroke-width="0.9"/><path d="M1082.8 587.7L1085.4 581L1088 587.7M1085.4 576v4" stroke="#0a0af0" stroke-width="1" fill="none"/><circle cx="1085.4" cy="579" r="1.9" fill="none" stroke="#0a0af0" stroke-width="0.9"/><path d="M1088 587.7L1090.6 581.1L1093.2 587.7M1090.6 576.1v4" stroke="#0a0af0" stroke-width="1" fill="none"/><circle cx="1090.6" cy="579.1" r="1.9" fill="none" stroke="#0a0af0" stroke-width="0.9"/><path d="M1093.2 587.8L1095.8 581.1L1098.4 587.8M1095.8 576.1v4" stroke="#0a0af0" stroke-width="1" fill="none"/><circle cx="1095.8" cy="579.1" r="1.9" fill="none" stroke="#0a0af0" stroke-width="0.9"/><path d="M1098.4 587.8L1101 581.2L1103.6 587.8M1101 576.2v4" stroke="#0a0af0" stroke-width="1" fill="none"/><circle cx="1101" cy="579.2" r="1.9" fill="none" stroke="#0a0af0" stroke-width="0.9"/><path d="M1103.6 587.9L1106.2 581.3L1108.8 587.9M1106.2 576.3v4" stroke="#0a0af0" stroke-width="1" fill="none"/><circle cx="1106.2" cy="579.3" r="1.9" fill="none" stroke="#0a0af0" stroke-width="0.9"/><path d="M1108.8 587.9L1111.4 581.4L1114 587.9M1111.4 576.4v4" stroke="#0a0af0" stroke-width="1" fill="none"/><circle cx="1111.4" cy="579.4" r="1.9" fill="none" stroke="#0a0af0" stroke-width="0.9"/><path d="M1114 588L1116.6 581.4L1119.2 588M1116.6 576.4v4" stroke="#0a0af0" stroke-width="1" fill="none"/><circle cx="1116.6" cy="579.4" r="1.9" fill="none" stroke="#0a0af0" stroke-width="0.9"/><path d="M1119.2 588.1L1121.8 581.5L1124.4 588.1M1121.8 576.5v4" stroke="#0a0af0" stroke-width="1" fill="none"/><circle cx="1121.8" cy="579.5" r="1.9" fill="none" stroke="#0a0af0" stroke-width="0.9"/><path d="M1124.4 588.1L1127 581.6L1129.6 588.1M1127 576.6v4" stroke="#0a0af0" stroke-width="1" fill="none"/><circle cx="1127" cy="579.6" r="1.9" fill="none" stroke="#0a0af0" stroke-width="0.9"/><path d="M1129.6 588.2L1132.2 581.6L1134.8 588.2M1132.2 576.6v4" stroke="#0a0af0" stroke-width="1" fill="none"/><circle cx="1132.2" cy="579.6" r="1.9" fill="none" stroke="#0a0af0" stroke-width="0.9"/><path d="M1134.8 588.2L1137.4 581.7L1140 588.2M1137.4 576.7v4" stroke="#0a0af0" stroke-width="1" fill="none"/><circle cx="1137.4" cy="579.7" r="1.9" fill="none" stroke="#0a0af0" stroke-width="0.9"/><path d="M1140 588.3L1142.6 581.8L1145.2 588.3M1142.6 576.8v4" stroke="#0a0af0" stroke-width="1" fill="none"/><circle cx="1142.6" cy="579.8" r="1.9" fill="none" stroke="#0a0af0" stroke-width="0.9"/><path d="M1145.2 588.3L1147.8 581.9L1150.4 588.3M1147.8 576.9v4" stroke="#0a0af0" stroke-width="1" fill="none"/><circle cx="1147.8" cy="579.9" r="1.9" fill="none" stroke="#0a0af0" stroke-width="0.9"/><path d="M1150.4 588.4L1153 581.9L1155.6 588.4M1153 576.9v4" stroke="#0a0af0" stroke-width="1" fill="none"/><circle cx="1153" cy="579.9" r="1.9" fill="none" stroke="#0a0af0" stroke-width="0.9"/><path d="M1155.6 588.5L1158.2 582L1160.8 588.5M1158.2 577v4" stroke="#0a0af0" stroke-width="1" fill="none"/><circle cx="1158.2" cy="580" r="1.9" fill="none" stroke="#0a0af0" stroke-width="0.9"/><path d="M1160.8 588.5L1163.4 582.1L1166 588.5M1163.4 577.1v4" stroke="#0a0af0" stroke-width="1" fill="none"/><circle cx="1163.4" cy="580.1" r="1.9" fill="none" stroke="#0a0af0" stroke-width="0.9"/><path d="M1166 588.6L1168.6 582.1L1171.2 588.6M1168.6 577.1v4" stroke="#0a0af0" stroke-width="1" fill="none"/><circle cx="1168.6" cy="580.1" r="1.9" fill="none" stroke="#0a0af0" stroke-width="0.9"/><path d="M1171.2 588.6L1173.8 582.2L1176.4 588.6M1173.8 577.2v4" stroke="#0a0af0" stroke-width="1" fill="none"/><circle cx="1173.8" cy="580.2" r="1.9" fill="none" stroke="#0a0af0" stroke-width="0.9"/><path d="M1176.4 588.7L1179 582.3L1181.6 588.7M1179 577.3v4" stroke="#0a0af0" stroke-width="1" fill="none"/><circle cx="1179" cy="580.3" r="1.9" fill="none" stroke="#0a0af0" stroke-width="0.9"/><path d="M1181.6 588.8L1184.2 582.4L1186.8 588.8M1184.2 577.4v4" stroke="#0a0af0" stroke-width="1" fill="none"/><circle cx="1184.2" cy="580.4" r="1.9" fill="none" stroke="#0a0af0" stroke-width="0.9"/><path d="M1186.8 588.8L1189.4 582.4L1192 588.8M1189.4 577.4v4" stroke="#0a0af0" stroke-width="1" fill="none"/><circle cx="1189.4" cy="580.4" r="1.9" fill="none" stroke="#0a0af0" stroke-width="0.9"/><path d="M1192 588.9L1194.6 582.5L1197.2 588.9M1194.6 577.5v4" stroke="#0a0af0" stroke-width="1" fill="none"/><circle cx="1194.6" cy="580.5" r="1.9" fill="none" stroke="#0a0af0" stroke-width="0.9"/><path d="M1197.2 588.9L1199.8 582.6L1202.4 588.9M1199.8 577.6v4" stroke="#0a0af0" stroke-width="1" fill="none"/><circle cx="1199.8" cy="580.6" r="1.9" fill="none" stroke="#0a0af0" stroke-width="0.9"/><path d="M1202.4 589L1205 582.6L1207.6 589M1205 577.6v4" stroke="#0a0af0" stroke-width="1" fill="none"/><circle cx="1205" cy="580.6" r="1.9" fill="none" stroke="#0a0af0" stroke-width="0.9"/><path d="M1207.6 589L1210.2 582.7L1212.8 589M1210.2 577.7v4" stroke="#0a0af0" stroke-width="1" fill="none"/><circle cx="1210.2" cy="580.7" r="1.9" fill="none" stroke="#0a0af0" stroke-width="0.9"/><path d="M1212.8 589.1L1215.4 582.8L1218 589.1M1215.4 577.8v4" stroke="#0a0af0" stroke-width="1" fill="none"/><circle cx="1215.4" cy="580.8" r="1.9" fill="none" stroke="#0a0af0" stroke-width="0.9"/><path d="M1218 589.2L1220.6 582.9L1223.2 589.2M1220.6 577.9v4" stroke="#0a0af0" stroke-width="1" fill="none"/><circle cx="1220.6" cy="580.9" r="1.9" fill="none" stroke="#0a0af0" stroke-width="0.9"/><path d="M1223.2 589.2L1225.8 582.9L1228.4 589.2M1225.8 577.9v4" stroke="#0a0af0" stroke-width="1" fill="none"/><circle cx="1225.8" cy="580.9" r="1.9" fill="none" stroke="#0a0af0" stroke-width="0.9"/><path d="M1228.4 589.3L1231 583L1233.6 589.3M1231 578v4" stroke="#0a0af0" stroke-width="1" fill="none"/><circle cx="1231" cy="581" r="1.9" fill="none" stroke="#0a0af0" stroke-width="0.9"/><path d="M1233.6 589.3L1236.2 583.1L1238.8 589.3M1236.2 578.1v4" stroke="#0a0af0" stroke-width="1" fill="none"/><circle cx="1236.2" cy="581.1" r="1.9" fill="none" stroke="#0a0af0" stroke-width="0.9"/><path d="M1238.8 589.4L1241.4 583.2L1244 589.4M1241.4 578.2v4" stroke="#0a0af0" stroke-width="1" fill="none"/><circle cx="1241.4" cy="581.2" r="1.9" fill="none" stroke="#0a0af0" stroke-width="0.9"/><path d="M1244 589.4L1246.6 583.2L1249.2 589.4M1246.6 578.2v4" stroke="#0a0af0" stroke-width="1" fill="none"/><circle cx="1246.6" cy="581.2" r="1.9" fill="none" stroke="#0a0af0" stroke-width="0.9"/><path d="M1249.2 589.5L1251.8 583.3L1254.4 589.5M1251.8 578.3v4" stroke="#0a0af0" stroke-width="1" fill="none"/><circle cx="1251.8" cy="581.3" r="1.9" fill="none" stroke="#0a0af0" stroke-width="0.9"/><path d="M1254.4 589.6L1257 583.4L1259.6 589.6M1257 578.4v4" stroke="#0a0af0" stroke-width="1" fill="none"/><circle cx="1257" cy="581.4" r="1.9" fill="none" stroke="#0a0af0" stroke-width="0.9"/><path d="M1259.6 589.6L1262.2 583.4L1264.8 589.6M1262.2 578.4v4" stroke="#0a0af0" stroke-width="1" fill="none"/><circle cx="1262.2" cy="581.4" r="1.9" fill="none" stroke="#0a0af0" stroke-width="0.9"/><path d="M1264.8 589.7L1267.4 583.5L1270 589.7M1267.4 578.5v4" stroke="#0a0af0" stroke-width="1" fill="none"/><circle cx="1267.4" cy="581.5" r="1.9" fill="none" stroke="#0a0af0" stroke-width="0.9"/><path d="M1270 589.7L1272.6 583.6L1275.2 589.7M1272.6 578.6v4" stroke="#0a0af0" stroke-width="1" fill="none"/><circle cx="1272.6" cy="581.6" r="1.9" fill="none" stroke="#0a0af0" stroke-width="0.9"/><path d="M1275.2 589.8L1277.8 583.7L1280.4 589.8M1277.8 578.7v4" stroke="#0a0af0" stroke-width="1" fill="none"/><circle cx="1277.8" cy="581.7" r="1.9" fill="none" stroke="#0a0af0" stroke-width="0.9"/><path d="M1280.4 589.9L1283 583.7L1285.6 589.9M1283 578.7v4" stroke="#0a0af0" stroke-width="1" fill="none"/><circle cx="1283" cy="581.7" r="1.9" fill="none" stroke="#0a0af0" stroke-width="0.9"/><path d="M1285.6 589.9L1288.2 583.8L1290.8 589.9M1288.2 578.8v4" stroke="#0a0af0" stroke-width="1" fill="none"/><circle cx="1288.2" cy="581.8" r="1.9" fill="none" stroke="#0a0af0" stroke-width="0.9"/><path d="M1290.8 590L1293.4 583.9L1296 590M1293.4 578.9v4" stroke="#0a0af0" stroke-width="1" fill="none"/><circle cx="1293.4" cy="581.9" r="1.9" fill="none" stroke="#0a0af0" stroke-width="0.9"/><path d="M1296 590L1298.6 583.9L1301.2 590M1298.6 578.9v4" stroke="#0a0af0" stroke-width="1" fill="none"/><circle cx="1298.6" cy="581.9" r="1.9" fill="none" stroke="#0a0af0" stroke-width="0.9"/><path d="M1301.2 590.1L1303.8 584L1306.4 590.1M1303.8 579v4" stroke="#0a0af0" stroke-width="1" fill="none"/><circle cx="1303.8" cy="582" r="1.9" fill="none" stroke="#0a0af0" stroke-width="0.9"/><path d="M1306.4 590.1L1309 584.1L1311.6 590.1M1309 579.1v4" stroke="#0a0af0" stroke-width="1" fill="none"/><circle cx="1309" cy="582.1" r="1.9" fill="none" stroke="#0a0af0" stroke-width="0.9"/><path d="M1311.6 590.2L1314.2 584.2L1316.8 590.2M1314.2 579.2v4" stroke="#0a0af0" stroke-width="1" fill="none"/><circle cx="1314.2" cy="582.2" r="1.9" fill="none" stroke="#0a0af0" stroke-width="0.9"/><path d="M1316.8 590.3L1319.4 584.2L1322 590.3M1319.4 579.2v4" stroke="#0a0af0" stroke-width="1" fill="none"/><circle cx="1319.4" cy="582.2" r="1.9" fill="none" stroke="#0a0af0" stroke-width="0.9"/><path d="M1322 590.3L1324.6 584.3L1327.2 590.3M1324.6 579.3v4" stroke="#0a0af0" stroke-width="1" fill="none"/><circle cx="1324.6" cy="582.3" r="1.9" fill="none" stroke="#0a0af0" stroke-width="0.9"/><path d="M1327.2 590.4L1329.8 584.4L1332.4 590.4M1329.8 579.4v4" stroke="#0a0af0" stroke-width="1" fill="none"/><circle cx="1329.8" cy="582.4" r="1.9" fill="none" stroke="#0a0af0" stroke-width="0.9"/><path d="M1332.4 590.4L1335 584.4L1337.6 590.4M1335 579.4v4" stroke="#0a0af0" stroke-width="1" fill="none"/><circle cx="1335" cy="582.4" r="1.9" fill="none" stroke="#0a0af0" stroke-width="0.9"/><path d="M1337.6 590.5L1340.2 584.5L1342.8 590.5M1340.2 579.5v4" stroke="#0a0af0" stroke-width="1" fill="none"/><circle cx="1340.2" cy="582.5" r="1.9" fill="none" stroke="#0a0af0" stroke-width="0.9"/><path d="M1342.8 590.5L1345.4 584.6L1348 590.5M1345.4 579.6v4" stroke="#0a0af0" stroke-width="1" fill="none"/><circle cx="1345.4" cy="582.6" r="1.9" fill="none" stroke="#0a0af0" stroke-width="0.9"/><path d="M1348 590.6L1350.6 584.7L1353.2 590.6M1350.6 579.7v4" stroke="#0a0af0" stroke-width="1" fill="none"/><circle cx="1350.6" cy="582.7" r="1.9" fill="none" stroke="#0a0af0" stroke-width="0.9"/><path d="M1353.2 590.7L1355.8 584.7L1358.4 590.7M1355.8 579.7v4" stroke="#0a0af0" stroke-width="1" fill="none"/><circle cx="1355.8" cy="582.7" r="1.9" fill="none" stroke="#0a0af0" stroke-width="0.9"/><path d="M1358.4 590.7L1361 584.8L1363.6 590.7M1361 579.8v4" stroke="#0a0af0" stroke-width="1" fill="none"/><circle cx="1361" cy="582.8" r="1.9" fill="none" stroke="#0a0af0" stroke-width="0.9"/><path d="M1363.6 590.8L1366.2 584.9L1368.8 590.8M1366.2 579.9v4" stroke="#0a0af0" stroke-width="1" fill="none"/><circle cx="1366.2" cy="582.9" r="1.9" fill="none" stroke="#0a0af0" stroke-width="0.9"/><path d="M1368.8 590.8L1371.4 584.9L1374 590.8M1371.4 579.9v4" stroke="#0a0af0" stroke-width="1" fill="none"/><circle cx="1371.4" cy="582.9" r="1.9" fill="none" stroke="#0a0af0" stroke-width="0.9"/><path d="M1374 590.9L1376.6 585L1379.2 590.9M1376.6 580v4" stroke="#0a0af0" stroke-width="1" fill="none"/><circle cx="1376.6" cy="583" r="1.9" fill="none" stroke="#0a0af0" stroke-width="0.9"/><path d="M1379.2 591L1381.8 585.1L1384.4 591M1381.8 580.1v4" stroke="#0a0af0" stroke-width="1" fill="none"/><circle cx="1381.8" cy="583.1" r="1.9" fill="none" stroke="#0a0af0" stroke-width="0.9"/><path d="M1384.4 591L1387 585.2L1389.6 591M1387 580.2v4" stroke="#0a0af0" stroke-width="1" fill="none"/><circle cx="1387" cy="583.2" r="1.9" fill="none" stroke="#0a0af0" stroke-width="0.9"/><path d="M1389.6 591.1L1392.2 585.2L1394.8 591.1M1392.2 580.2v4" stroke="#0a0af0" stroke-width="1" fill="none"/><circle cx="1392.2" cy="583.2" r="1.9" fill="none" stroke="#0a0af0" stroke-width="0.9"/><path d="M1394.8 591.1L1397.4 585.3L1400 591.1M1397.4 580.3v4" stroke="#0a0af0" stroke-width="1" fill="none"/><circle cx="1397.4" cy="583.3" r="1.9" fill="none" stroke="#0a0af0" stroke-width="0.9"/><path d="M1400 591.2L1402.6 585.4L1405.2 591.2M1402.6 580.4v4" stroke="#0a0af0" stroke-width="1" fill="none"/><circle cx="1402.6" cy="583.4" r="1.9" fill="none" stroke="#0a0af0" stroke-width="0.9"/><path d="M1405.2 591.2L1407.8 585.4L1410.4 591.2M1407.8 580.4v4" stroke="#0a0af0" stroke-width="1" fill="none"/><circle cx="1407.8" cy="583.4" r="1.9" fill="none" stroke="#0a0af0" stroke-width="0.9"/><path d="M1410.4 591.3L1413 585.5L1415.6 591.3M1413 580.5v4" stroke="#0a0af0" stroke-width="1" fill="none"/><circle cx="1413" cy="583.5" r="1.9" fill="none" stroke="#0a0af0" stroke-width="0.9"/><path d="M1415.6 591.4L1418.2 585.6L1420.8 591.4M1418.2 580.6v4" stroke="#0a0af0" stroke-width="1" fill="none"/><circle cx="1418.2" cy="583.6" r="1.9" fill="none" stroke="#0a0af0" stroke-width="0.9"/><path d="M1420.8 591.4L1423.4 585.7L1426 591.4M1423.4 580.7v4" stroke="#0a0af0" stroke-width="1" fill="none"/><circle cx="1423.4" cy="583.7" r="1.9" fill="none" stroke="#0a0af0" stroke-width="0.9"/><path d="M1426 591.5L1428.6 585.7L1431.2 591.5M1428.6 580.7v4" stroke="#0a0af0" stroke-width="1" fill="none"/><circle cx="1428.6" cy="583.7" r="1.9" fill="none" stroke="#0a0af0" stroke-width="0.9"/><path d="M1431.2 591.5L1433.8 585.8L1436.4 591.5M1433.8 580.8v4" stroke="#0a0af0" stroke-width="1" fill="none"/><circle cx="1433.8" cy="583.8" r="1.9" fill="none" stroke="#0a0af0" stroke-width="0.9"/><path d="M1436.4 591.6L1439 585.9L1441.6 591.6M1439 580.9v4" stroke="#0a0af0" stroke-width="1" fill="none"/><circle cx="1439" cy="583.9" r="1.9" fill="none" stroke="#0a0af0" stroke-width="0.9"/><path d="M1441.6 591.6L1444.2 585.9L1446.8 591.6M1444.2 580.9v4" stroke="#0a0af0" stroke-width="1" fill="none"/><circle cx="1444.2" cy="583.9" r="1.9" fill="none" stroke="#0a0af0" stroke-width="0.9"/><path d="M1446.8 591.7L1449.4 586L1452 591.7M1449.4 581v4" stroke="#0a0af0" stroke-width="1" fill="none"/><circle cx="1449.4" cy="584" r="1.9" fill="none" stroke="#0a0af0" stroke-width="0.9"/><path d="M1452 591.8L1454.6 586.1L1457.2 591.8M1454.6 581.1v4" stroke="#0a0af0" stroke-width="1" fill="none"/><circle cx="1454.6" cy="584.1" r="1.9" fill="none" stroke="#0a0af0" stroke-width="0.9"/><path d="M1457.2 591.8L1459.8 586.2L1462.4 591.8M1459.8 581.2v4" stroke="#0a0af0" stroke-width="1" fill="none"/><circle cx="1459.8" cy="584.2" r="1.9" fill="none" stroke="#0a0af0" stroke-width="0.9"/><path d="M1462.4 591.9L1465 586.2L1467.6 591.9M1465 581.2v4" stroke="#0a0af0" stroke-width="1" fill="none"/><circle cx="1465" cy="584.2" r="1.9" fill="none" stroke="#0a0af0" stroke-width="0.9"/><path d="M1467.6 591.9L1470.2 586.3L1472.8 591.9M1470.2 581.3v4" stroke="#0a0af0" stroke-width="1" fill="none"/><circle cx="1470.2" cy="584.3" r="1.9" fill="none" stroke="#0a0af0" stroke-width="0.9"/><path d="M1472.8 592L1475.4 586.4L1478 592M1475.4 581.4v4" stroke="#0a0af0" stroke-width="1" fill="none"/><circle cx="1475.4" cy="584.4" r="1.9" fill="none" stroke="#0a0af0" stroke-width="0.9"/><path d="M1478 592.1L1480.6 586.4L1483.2 592.1M1480.6 581.4v4" stroke="#0a0af0" stroke-width="1" fill="none"/><circle cx="1480.6" cy="584.4" r="1.9" fill="none" stroke="#0a0af0" stroke-width="0.9"/><path d="M1483.2 592.1L1485.8 586.5L1488.4 592.1M1485.8 581.5v4" stroke="#0a0af0" stroke-width="1" fill="none"/><circle cx="1485.8" cy="584.5" r="1.9" fill="none" stroke="#0a0af0" stroke-width="0.9"/><path d="M1488.4 592.2L1491 586.6L1493.6 592.2M1491 581.6v4" stroke="#0a0af0" stroke-width="1" fill="none"/><circle cx="1491" cy="584.6" r="1.9" fill="none" stroke="#0a0af0" stroke-width="0.9"/><path d="M1493.6 592.2L1496.2 586.7L1498.8 592.2M1496.2 581.7v4" stroke="#0a0af0" stroke-width="1" fill="none"/><circle cx="1496.2" cy="584.7" r="1.9" fill="none" stroke="#0a0af0" stroke-width="0.9"/><path d="M1498.8 592.3L1501.4 586.7L1504 592.3M1501.4 581.7v4" stroke="#0a0af0" stroke-width="1" fill="none"/><circle cx="1501.4" cy="584.7" r="1.9" fill="none" stroke="#0a0af0" stroke-width="0.9"/><path d="M1504 592.3L1506.6 586.8L1509.2 592.3M1506.6 581.8v4" stroke="#0a0af0" stroke-width="1" fill="none"/><circle cx="1506.6" cy="584.8" r="1.9" fill="none" stroke="#0a0af0" stroke-width="0.9"/><path d="M1509.2 592.4L1511.8 586.9L1514.4 592.4M1511.8 581.9v4" stroke="#0a0af0" stroke-width="1" fill="none"/><circle cx="1511.8" cy="584.9" r="1.9" fill="none" stroke="#0a0af0" stroke-width="0.9"/><path d="M1514.4 592.5L1517 587L1519.6 592.5M1517 582v4" stroke="#0a0af0" stroke-width="1" fill="none"/><circle cx="1517" cy="585" r="1.9" fill="none" stroke="#0a0af0" stroke-width="0.9"/><path d="M568 576.9L1518 587" stroke="#0a0af0" stroke-width="1" /><path d="M494 578l2.5 -7l2.5 4" stroke="#2a2ad0" stroke-width="1" fill="none"/><path d="M499.2 574.8l2.5 -6.9l2.5 4" stroke="#2a2ad0" stroke-width="1" fill="none"/><path d="M504.4 571.5l2.4 -6.8l2.4 3.9" stroke="#2a2ad0" stroke-width="1" fill="none"/><path d="M509.6 568.3l2.4 -6.8l2.4 3.9" stroke="#2a2ad0" stroke-width="1" fill="none"/><path d="M514.8 565l2.4 -6.7l2.4 3.8" stroke="#2a2ad0" stroke-width="1" fill="none"/><path d="M520 561.8l2.4 -6.6l2.4 3.8" stroke="#2a2ad0" stroke-width="0.9" fill="none"/><path d="M525.2 558.5l2.3 -6.5l2.3 3.7" stroke="#2a2ad0" stroke-width="0.9" fill="none"/><path d="M530.4 555.3l2.3 -6.4l2.3 3.7" stroke="#2a2ad0" stroke-width="0.9" fill="none"/><path d="M535.6 552l2.3 -6.3l2.3 3.6" stroke="#2a2ad0" stroke-width="0.9" fill="none"/><path d="M540.8 548.8l2.2 -6.3l2.2 3.6" stroke="#2a2ad0" stroke-width="0.9" fill="none"/><path d="M546 545.5l2.2 -6.2l2.2 3.5" stroke="#2a2ad0" stroke-width="0.9" fill="none"/><path d="M551.2 542.3l2.2 -6.1l2.2 3.5" stroke="#2a2ad0" stroke-width="0.9" fill="none"/><path d="M556.4 539.1l2.1 -6l2.1 3.4" stroke="#2a2ad0" stroke-width="0.9" fill="none"/><path d="M561.6 535.8l2.1 -5.9l2.1 3.4" stroke="#2a2ad0" stroke-width="0.8" fill="none"/><path d="M566.8 532.6l2.1 -5.9l2.1 3.3" stroke="#2a2ad0" stroke-width="0.8" fill="none"/><path d="M572 529.3l2.1 -5.8l2.1 3.3" stroke="#2a2ad0" stroke-width="0.8" fill="none"/><path d="M577.2 526.1l2 -5.7l2 3.3" stroke="#2a2ad0" stroke-width="0.8" fill="none"/><path d="M582.4 522.8l2 -5.6l2 3.2" stroke="#2a2ad0" stroke-width="0.8" fill="none"/><path d="M587.6 519.6l2 -5.5l2 3.2" stroke="#2a2ad0" stroke-width="0.8" fill="none"/><path d="M592.8 516.3l1.9 -5.4l1.9 3.1" stroke="#2a2ad0" stroke-width="0.8" fill="none"/><path d="M598 513.1l1.9 -5.4l1.9 3.1" stroke="#2a2ad0" stroke-width="0.8" fill="none"/><path d="M603.2 509.9l1.9 -5.3l1.9 3" stroke="#2a2ad0" stroke-width="0.8" fill="none"/><path d="M608.4 506.6l1.9 -5.2l1.9 3" stroke="#2a2ad0" stroke-width="0.7" fill="none"/><path d="M613.6 503.4l1.8 -5.1l1.8 2.9" stroke="#2a2ad0" stroke-width="0.7" fill="none"/><path d="M618.8 500.1l1.8 -5l1.8 2.9" stroke="#2a2ad0" stroke-width="0.7" fill="none"/><path d="M624 496.9l1.8 -5l1.8 2.8" stroke="#2a2ad0" stroke-width="0.7" fill="none"/><path d="M629.2 493.6l1.7 -4.9l1.7 2.8" stroke="#2a2ad0" stroke-width="0.7" fill="none"/><path d="M634.4 490.4l1.7 -4.8l1.7 2.7" stroke="#2a2ad0" stroke-width="0.7" fill="none"/><path d="M639.6 487.1l1.7 -4.7l1.7 2.7" stroke="#2a2ad0" stroke-width="0.7" fill="none"/><path d="M644.8 483.9l1.7 -4.6l1.7 2.6" stroke="#2a2ad0" stroke-width="0.7" fill="none"/><path d="M650 480.6l1.6 -4.5l1.6 2.6" stroke="#2a2ad0" stroke-width="0.7" fill="none"/><path d="M655.2 477.4l1.6 -4.5l1.6 2.6" stroke="#2a2ad0" stroke-width="0.6" fill="none"/><path d="M660.4 474.2l1.6 -4.4l1.6 2.5" stroke="#2a2ad0" stroke-width="0.6" fill="none"/><path d="M665.6 470.9l1.5 -4.3l1.5 2.5" stroke="#2a2ad0" stroke-width="0.6" fill="none"/><path d="M670.8 467.7l1.5 -4.2l1.5 2.4" stroke="#2a2ad0" stroke-width="0.6" fill="none"/><path d="M676 464.4l1.5 -4.1l1.5 2.4" stroke="#2a2ad0" stroke-width="0.6" fill="none"/><path d="M681.2 461.2l1.5 -4.1l1.5 2.3" stroke="#2a2ad0" stroke-width="0.6" fill="none"/><path d="M686.4 457.9l1.4 -4l1.4 2.3" stroke="#2a2ad0" stroke-width="0.6" fill="none"/><path d="M691.6 454.7l1.4 -3.9l1.4 2.2" stroke="#2a2ad0" stroke-width="0.6" fill="none"/><path d="M696.8 451.4l1.4 -3.8l1.4 2.2" stroke="#2a2ad0" stroke-width="0.5" fill="none"/><path d="M702 448.2l1.3 -3.7l1.3 2.1" stroke="#2a2ad0" stroke-width="0.5" fill="none"/><path d="M707.2 445l1.3 -3.7l1.3 2.1" stroke="#2a2ad0" stroke-width="0.5" fill="none"/><path d="M712.4 441.7l1.3 -3.6l1.3 2" stroke="#2a2ad0" stroke-width="0.5" fill="none"/><path d="M717.6 438.5l1.2 -3.5l1.2 2" stroke="#2a2ad0" stroke-width="0.5" fill="none"/><path d="M722.8 435.2l1.2 -3.4l1.2 1.9" stroke="#2a2ad0" stroke-width="0.5" fill="none"/><path d="M728 432l1.2 -3.3l1.2 1.9" stroke="#2a2ad0" stroke-width="0.5" fill="none"/><path d="M733.2 428.7l1.2 -3.2l1.2 1.9" stroke="#2a2ad0" stroke-width="0.5" fill="none"/><path d="M738.4 425.5l1.1 -3.2l1.1 1.8" stroke="#2a2ad0" stroke-width="0.5" fill="none"/><path d="M743.6 422.2l1.1 -3.1l1.1 1.8" stroke="#2a2ad0" stroke-width="0.5" fill="none"/><path d="M748.8 419l1.1 -3l1.1 1.7" stroke="#2a2ad0" stroke-width="0.5" fill="none"/><path d="M754 415.8l1 -2.9l1 1.7" stroke="#2a2ad0" stroke-width="0.5" fill="none"/><path d="M759.2 412.5l1 -2.8l1 1.6" stroke="#2a2ad0" stroke-width="0.5" fill="none"/><path d="M764.4 409.3l1 -2.8l1 1.6" stroke="#2a2ad0" stroke-width="0.5" fill="none"/><path d="M769.6 406l1 -2.7l1 1.5" stroke="#2a2ad0" stroke-width="0.5" fill="none"/><path d="M774.8 402.8l0.9 -2.6l0.9 1.5" stroke="#2a2ad0" stroke-width="0.5" fill="none"/><path d="M780 399.5l0.9 -2.5l0.9 1.4" stroke="#2a2ad0" stroke-width="0.5" fill="none"/><path d="M785.2 396.3l0.9 -2.4l0.9 1.4" stroke="#2a2ad0" stroke-width="0.5" fill="none"/><path d="M790.4 393l0.8 -2.3l0.8 1.3" stroke="#2a2ad0" stroke-width="0.5" fill="none"/><path d="M795.6 389.8l0.8 -2.3l0.8 1.3" stroke="#2a2ad0" stroke-width="0.5" fill="none"/><path d="M800.8 386.5l0.8 -2.2l0.8 1.2" stroke="#2a2ad0" stroke-width="0.5" fill="none"/><text x="355" y="174.3" font-size="12.95" fill="#16223f">[Персп.] [Тонированный]</text><g transform="translate(1237.7,170.7)"><path d="M0 -14.5L14.5 0L0 14.5L-14.5 0Z" fill="#aeaeae" opacity="0.55"/><path d="M0 -13.5L5.5 -7H2V-2H7V-5.5L13.5 0L7 5.5V2H2V7H5.5L0 13.5L-5.5 7H-2V2H-7V5.5L-13.5 0L-7 -5.5V-2H-2V-7H-5.5Z" fill="#fff"/></g><g transform="translate(1280,171.5)"><path d="M-7.5 -6.5A10 10 0 1 0 2 -9.8" fill="none" stroke="#fff" stroke-width="4.6"/><path d="M-14.5 -8.5L-2.5 -10.5L-8 1Z" fill="#fff"/></g><circle cx="1361.1" cy="272.7" r="93.2" fill="none" stroke="#4e4e4e" stroke-width="1"/><path d="M1451.3 272.7L1457.3 272.7" stroke="#444" stroke-width="1.2"/><path d="M1361.1 362.9L1361.1 368.9" stroke="#444" stroke-width="1.2"/><path d="M1270.9 272.7L1264.9 272.7" stroke="#444" stroke-width="1.2"/><path d="M1361.1 182.5L1361.1 176.5" stroke="#444" stroke-width="1.2"/><path d="M1424.5 336.1l5 5M1429.5 336.1l-5 5" stroke="#3c4c50" stroke-width="1"/><path d="M1292.7 336.1l5 5M1297.7 336.1l-5 5" stroke="#3c4c50" stroke-width="1"/><path d="M1292.7 204.3l5 5M1297.7 204.3l-5 5" stroke="#3c4c50" stroke-width="1"/><path d="M1424.5 204.3l5 5M1429.5 204.3l-5 5" stroke="#3c4c50" stroke-width="1"/><rect x="1325.8" y="211.3" width="70.2" height="22.8" fill="#505050" opacity="0.78"/><rect x="1325.8" y="238.2" width="70.2" height="69.3" fill="#505050" opacity="0.78"/><rect x="1299.3" y="238.2" width="22.9" height="69.3" fill="#505050" opacity="0.78"/><rect x="1399.8" y="238.2" width="22.8" height="69.3" fill="#505050" opacity="0.78"/><rect x="1325.8" y="311.5" width="70.2" height="23.1" fill="#505050" opacity="0.78"/><text x="1361" y="227.2" font-size="13" fill="#f4f4f4" text-anchor="middle">[Сзади]</text><text x="1361" y="277" font-size="13" fill="#f4f4f4" text-anchor="middle">[Сверху]</text><text x="1361" y="327.3" font-size="13" fill="#f4f4f4" text-anchor="middle">[Спереди]</text><text transform="translate(1315.3,272.8) rotate(-90)" font-size="13" fill="#f4f4f4" text-anchor="middle">[Слева]</text><text transform="translate(1415.6,272.8) rotate(-90)" font-size="13" fill="#f4f4f4" text-anchor="middle">[Справа]</text><text x="1361.5" y="170.5" font-size="16" fill="#2e2e2e" text-anchor="middle">С</text><text x="1363.5" y="386" font-size="16" fill="#2e2e2e" text-anchor="middle">Ю</text><text x="1258" y="278.5" font-size="16" fill="#2e2e2e" text-anchor="middle">З</text><text x="1464" y="278.5" font-size="16" fill="#2e2e2e" text-anchor="middle">В</text><path d="M1481.3 178.8V366.3" stroke="#505050" stroke-width="1.3"/><path d="M1478.8 178.8h7" stroke="#505050" stroke-width="1.2"/><path d="M1478.8 194.4h5" stroke="#505050" stroke-width="1.2"/><path d="M1478.8 210.1h5" stroke="#505050" stroke-width="1.2"/><path d="M1478.8 225.7h7" stroke="#505050" stroke-width="1.2"/><path d="M1478.8 241.3h5" stroke="#505050" stroke-width="1.2"/><path d="M1478.8 256.9h5" stroke="#505050" stroke-width="1.2"/><path d="M1478.8 272.6h7" stroke="#505050" stroke-width="1.2"/><path d="M1478.8 288.2h5" stroke="#505050" stroke-width="1.2"/><path d="M1478.8 303.8h5" stroke="#505050" stroke-width="1.2"/><path d="M1478.8 319.4h7" stroke="#505050" stroke-width="1.2"/><path d="M1478.8 335.1h5" stroke="#505050" stroke-width="1.2"/><path d="M1478.8 350.7h5" stroke="#505050" stroke-width="1.2"/><path d="M1478.8 366.3h7" stroke="#505050" stroke-width="1.2"/><text x="1488" y="184.8" font-size="13" fill="#2a2a2a">+90</text><text x="1488" y="230.6" font-size="13" fill="#2a2a2a">+45</text><text x="1488" y="277.6" font-size="13" fill="#2a2a2a">0</text><text x="1491" y="324.3" font-size="13" fill="#2a2a2a">-45</text><text x="1491" y="370.8" font-size="13" fill="#2a2a2a">-90</text><path d="M1471 283L1480.8 287.5L1471 292Z" fill="#000"/><path d="M1434.5 311.5L1441 304.5L1445.5 311.5Z" fill="#000"/><path d="M1497 411.8C1491 405 1483.4 402 1483.4 396.2a13.6 12 0 0 1 27.2 0C1510.6 402 1503 405 1497 411.8Z" fill="#fff"/><circle cx="1497" cy="396" r="5.6" fill="#a4a4a4" stroke="#8a8a8a" stroke-width="2.6"/><circle cx="1497" cy="434" r="14.6" fill="#fff"/><path d="M1483 431c8 7 20 7 28 0M1494 419.8c-7 8-7 20 0 28.4" fill="none" stroke="#8a8a8a" stroke-width="1.3"/><circle cx="1508.3" cy="422.7" r="3.4" fill="#f01020"/><path d="M1482.6 466.5L1490.5 459H1511.2V478.5L1503 486H1482.6Z" fill="#fff"/><path d="M1482.6 466.5H1503V486M1503 466.5L1511.2 459M1484 478l11-11M1484.5 485l17.5-17.5M1493 485.5l9.5-9.5" fill="none" stroke="#8a8a8a" stroke-width="1.2"/><rect x="1481.5" y="493.2" width="30.5" height="28" fill="#fff" stroke="#a0a0a0" stroke-width="1"/><path d="M1484 507.2l6.5-6.5v4h12.5v-4l6.5 6.5l-6.5 6.5v-4h-12.5v4z" fill="#fff" stroke="#8a8a8a" stroke-width="1.2" stroke-linejoin="miter"/></svg>
</body></html>
